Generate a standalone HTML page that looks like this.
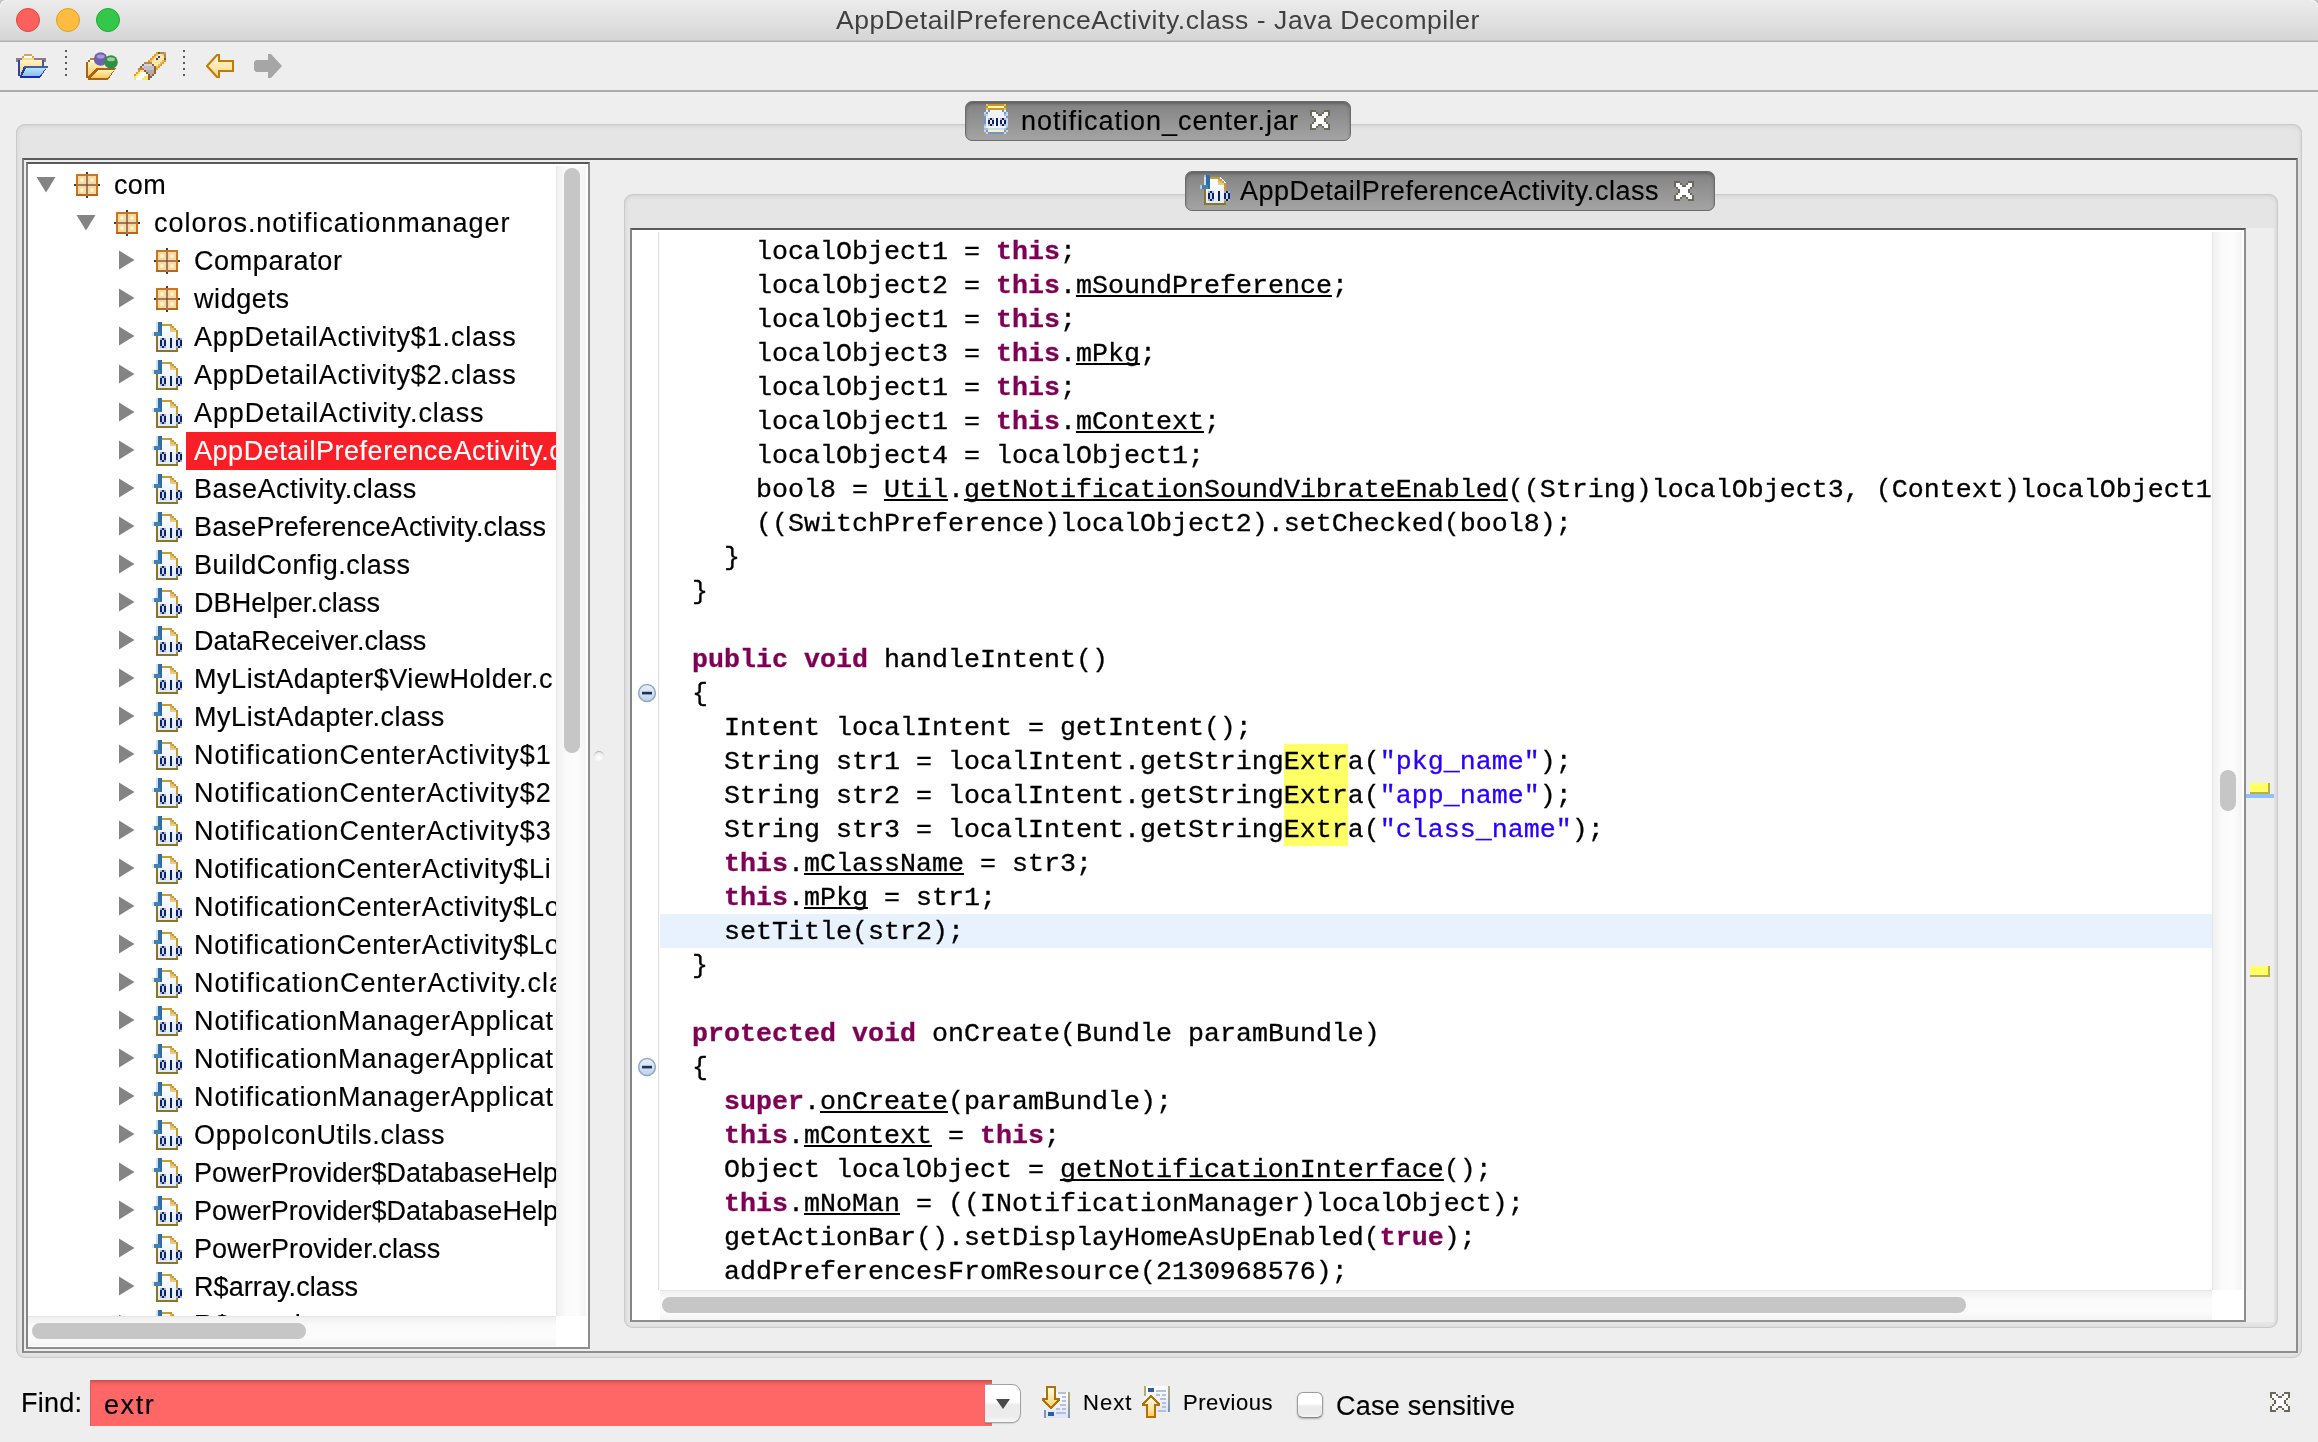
<!DOCTYPE html>
<html><head><meta charset="utf-8"><title>Java Decompiler</title>
<style>
html,body{margin:0;padding:0}
body{width:2318px;height:1442px;position:relative;overflow:hidden;background:#eeeeee;font-family:"Liberation Sans", sans-serif;color:#000}
div,span,svg{box-sizing:border-box}
.a{position:absolute}
.ic{position:absolute;display:block}
.t{position:absolute;white-space:pre;font-size:26px;line-height:30px;height:30px;-webkit-text-stroke:0.15px currentColor}
#title{-webkit-text-stroke:0}
.row{position:absolute;left:0;width:528px;height:38px}
.cl{position:absolute;left:0;white-space:pre;font-family:"Liberation Mono", monospace;font-size:26.667px;line-height:34px;height:34px;color:#000;-webkit-text-stroke:0.3px currentColor}
.k{color:#7f0055;font-weight:bold}
.s{color:#2a00ff}
.u{text-decoration:underline;text-decoration-thickness:2px;text-underline-offset:2px;text-decoration-skip-ink:none}
.h{background:#ffff66}
.thumb{position:absolute;background:#c6c6c6;border-radius:8px}
</style></head><body><div id="root" style="position:absolute;left:0;top:0;width:2318px;height:1442px;will-change:transform">

<div class="a" style="left:0;top:0;width:2318px;height:42px;background:linear-gradient(#ececec,#d5d5d5);border-bottom:1px solid #aeaeae;box-shadow:inset 0 -1px 0 #c6c6c6"></div>
<div class="a" style="left:16px;top:8px;width:24px;height:24px;border-radius:12px;background:#fc605c;border:1px solid #e0443e"></div>
<div class="a" style="left:56px;top:8px;width:24px;height:24px;border-radius:12px;background:#fdbc40;border:1px solid #dfa023"></div>
<div class="a" style="left:96px;top:8px;width:24px;height:24px;border-radius:12px;background:#34c84a;border:1px solid #1fa82f"></div>
<div class="t" id="title" style="left:836px;top:5px;color:#404040;font-size:26.5px;letter-spacing:0.565px">AppDetailPreferenceActivity.class - Java Decompiler</div>

<svg class="ic" style="left:0;top:0" width="8" height="8" viewBox="0 0 8 8"><path d="M0 0H6Q0.5 0.5 0 6Z" fill="#c4c4c4"/><path d="M0.6 7Q0.8 0.8 7 0.6" fill="none" stroke="#f6f6f6" stroke-width="1"/></svg>
<svg class="ic" style="left:2310px;top:0" width="8" height="8" viewBox="0 0 8 8"><path d="M8 0H2Q7.5 0.5 8 6Z" fill="#c4c4c4"/><path d="M7.4 7Q7.2 0.8 1 0.6" fill="none" stroke="#f6f6f6" stroke-width="1"/></svg>
<div class="a" style="left:0;top:90px;width:2318px;height:2px;background:#ababab"></div>
<div class="a" style="left:65px;top:50px;width:2px;height:2px;background:#5a5a5a"></div>
<div class="a" style="left:65px;top:56px;width:2px;height:2px;background:#5a5a5a"></div>
<div class="a" style="left:65px;top:62px;width:2px;height:2px;background:#5a5a5a"></div>
<div class="a" style="left:65px;top:68px;width:2px;height:2px;background:#5a5a5a"></div>
<div class="a" style="left:65px;top:74px;width:2px;height:2px;background:#5a5a5a"></div>
<div class="a" style="left:183px;top:50px;width:2px;height:2px;background:#5a5a5a"></div>
<div class="a" style="left:183px;top:56px;width:2px;height:2px;background:#5a5a5a"></div>
<div class="a" style="left:183px;top:62px;width:2px;height:2px;background:#5a5a5a"></div>
<div class="a" style="left:183px;top:68px;width:2px;height:2px;background:#5a5a5a"></div>
<div class="a" style="left:183px;top:74px;width:2px;height:2px;background:#5a5a5a"></div>
<svg class="ic" style="left:16px;top:54px" width="32" height="24" viewBox="0 0 16 12" shape-rendering="crispEdges">
<defs><linearGradient id="f1" x1="0" y1="0" x2="0" y2="1"><stop offset="0" stop-color="#fff2c8"/><stop offset="1" stop-color="#ffcf5a"/></linearGradient>
<linearGradient id="f2" x1="0" y1="0" x2="0" y2="1"><stop offset="0" stop-color="#b4e6ff"/><stop offset="1" stop-color="#8fbcf0"/></linearGradient></defs>
<rect x="4" y="0" width="4" height="1" fill="#d4a55a"/><rect x="3" y="1" width="1" height="1" fill="#d4a55a"/><rect x="8" y="1" width="1" height="1" fill="#d4a55a"/><rect x="4" y="1" width="4" height="1" fill="#ffffff"/>
<rect x="0" y="2" width="15" height="2" fill="#8d7c8c"/><rect x="3" y="2" width="6" height="1" fill="#f7d98a"/>
<rect x="2" y="3" width="11" height="8" fill="url(#f1)"/>
<rect x="1" y="3" width="1" height="8" fill="#2a44a8"/><rect x="13" y="3" width="1" height="3" fill="#4a5aa0"/>
<polygon points="4,6 16,6 12,12 2,12 2,11" fill="#2238a8"/>
<polygon points="5,7 15,7 12,11 3,11" fill="url(#f2)"/>
<rect x="4" y="6" width="12" height="1" fill="#4a5aa0"/>
<rect x="2" y="11" width="10" height="1" fill="#1030b0"/>
</svg>
<svg class="ic" style="left:86px;top:52px" width="32" height="28" viewBox="0 0 16 14">
<defs><linearGradient id="g1" x1="0" y1="0" x2="0" y2="1"><stop offset="0" stop-color="#fff0c0"/><stop offset="1" stop-color="#f8c860"/></linearGradient></defs>
<g shape-rendering="crispEdges">
<rect x="2" y="3" width="2" height="1" fill="#d08010"/><rect x="1" y="4" width="1" height="1" fill="#b0620a"/><rect x="2" y="4" width="2" height="1" fill="#fff"/>
<rect x="0" y="5" width="1" height="8" fill="#b0620a"/>
<rect x="1" y="5" width="8" height="8" fill="url(#g1)"/>
<polygon points="5,8 15,8 11,14 1,14 1,12" fill="#b0620a"/>
<polygon points="6,9 14,9 11,13 2,13" fill="url(#g1)"/>
<rect x="1" y="13" width="10" height="1" fill="#b0620a"/>
</g>
<circle cx="7.3" cy="3.5" r="3.4" fill="#6f60b0"/><ellipse cx="7.3" cy="2.2" rx="2" ry="1" fill="#a79cd8"/>
<circle cx="12.5" cy="5" r="3.4" fill="#2f8f45"/><ellipse cx="12.5" cy="3.6" rx="2" ry="1" fill="#9ccf90"/>
</svg>
<svg class="ic" style="left:134px;top:52px" width="32" height="28" viewBox="0 0 16 14" shape-rendering="crispEdges"><rect x="11" y="0" width="1" height="1" fill="#f09a20"/><rect x="12" y="0" width="1" height="1" fill="#7a5530"/><rect x="13" y="0" width="2" height="1" fill="#b08850"/><rect x="15" y="0" width="1" height="1" fill="#c8a060"/><rect x="10" y="1" width="1" height="1" fill="#f09a20"/><rect x="11" y="1" width="1" height="1" fill="#f4b860"/><rect x="12" y="1" width="2" height="1" fill="#fde9a0"/><rect x="14" y="1" width="1" height="1" fill="#d0cce0"/><rect x="15" y="1" width="1" height="1" fill="#b08850"/><rect x="9" y="2" width="1" height="1" fill="#f09a20"/><rect x="10" y="2" width="1" height="1" fill="#f4b860"/><rect x="11" y="2" width="1" height="1" fill="#fff4b8"/><rect x="12" y="2" width="1" height="1" fill="#1c4aa8"/><rect x="13" y="2" width="2" height="1" fill="#fde9a0"/><rect x="15" y="2" width="1" height="1" fill="#b08850"/><rect x="8" y="3" width="1" height="1" fill="#f09a20"/><rect x="9" y="3" width="1" height="1" fill="#f4b860"/><rect x="10" y="3" width="1" height="1" fill="#fff4b8"/><rect x="11" y="3" width="1" height="1" fill="#1c4aa8"/><rect x="12" y="3" width="3" height="1" fill="#fde9a0"/><rect x="15" y="3" width="1" height="1" fill="#7a5530"/><rect x="7" y="4" width="1" height="1" fill="#f09a20"/><rect x="8" y="4" width="1" height="1" fill="#f4b860"/><rect x="9" y="4" width="5" height="1" fill="#fde9a0"/><rect x="14" y="4" width="1" height="1" fill="#f4b860"/><rect x="15" y="4" width="1" height="1" fill="#f09a20"/><rect x="5" y="5" width="4" height="1" fill="#b08850"/><rect x="9" y="5" width="4" height="1" fill="#fde9a0"/><rect x="13" y="5" width="1" height="1" fill="#f4b860"/><rect x="14" y="5" width="1" height="1" fill="#f09a20"/><rect x="4" y="6" width="1" height="1" fill="#8a6438"/><rect x="5" y="6" width="4" height="1" fill="#d4d2da"/><rect x="9" y="6" width="1" height="1" fill="#8a6438"/><rect x="10" y="6" width="2" height="1" fill="#fde9a0"/><rect x="12" y="6" width="1" height="1" fill="#f4b860"/><rect x="13" y="6" width="1" height="1" fill="#f09a20"/><rect x="3" y="7" width="1" height="1" fill="#8a6438"/><rect x="4" y="7" width="1" height="1" fill="#d4d2da"/><rect x="5" y="7" width="5" height="1" fill="#c4bcc6"/><rect x="10" y="7" width="1" height="1" fill="#8a6438"/><rect x="11" y="7" width="1" height="1" fill="#f4b860"/><rect x="12" y="7" width="1" height="1" fill="#f09a20"/><rect x="2" y="8" width="3" height="1" fill="#b08850"/><rect x="5" y="8" width="5" height="1" fill="#c4bcc6"/><rect x="10" y="8" width="1" height="1" fill="#8a6438"/><rect x="11" y="8" width="1" height="1" fill="#f09a20"/><rect x="2" y="9" width="1" height="1" fill="#f09a20"/><rect x="3" y="9" width="2" height="1" fill="#ffe470"/><rect x="5" y="9" width="1" height="1" fill="#8a6438"/><rect x="6" y="9" width="4" height="1" fill="#b4a8b2"/><rect x="10" y="9" width="1" height="1" fill="#8a6438"/><rect x="1" y="10" width="1" height="1" fill="#f09a20"/><rect x="2" y="10" width="1" height="1" fill="#ffe470"/><rect x="3" y="10" width="1" height="1" fill="#fff8d0"/><rect x="4" y="10" width="2" height="1" fill="#ffffff"/><rect x="6" y="10" width="1" height="1" fill="#8a6438"/><rect x="7" y="10" width="3" height="1" fill="#b4a8b2"/><rect x="10" y="10" width="1" height="1" fill="#8a6438"/><rect x="0" y="11" width="1" height="1" fill="#f09a20"/><rect x="1" y="11" width="1" height="1" fill="#ffe470"/><rect x="2" y="11" width="1" height="1" fill="#fff8d0"/><rect x="3" y="11" width="3" height="1" fill="#ffffff"/><rect x="6" y="11" width="1" height="1" fill="#fff8d0"/><rect x="7" y="11" width="1" height="1" fill="#8a6438"/><rect x="8" y="11" width="1" height="1" fill="#b4a8b2"/><rect x="9" y="11" width="1" height="1" fill="#8a6438"/><rect x="0" y="12" width="1" height="1" fill="#ffe470"/><rect x="1" y="12" width="1" height="1" fill="#fff8d0"/><rect x="2" y="12" width="3" height="1" fill="#ffffff"/><rect x="5" y="12" width="2" height="1" fill="#ffe470"/><rect x="7" y="12" width="2" height="1" fill="#8a6438"/><rect x="0" y="13" width="1" height="1" fill="#ffe470"/><rect x="1" y="13" width="3" height="1" fill="#ffffff"/><rect x="4" y="13" width="3" height="1" fill="#ffe470"/><rect x="7" y="13" width="1" height="1" fill="#8a6438"/></svg>
<svg class="ic" style="left:206px;top:54px" width="28" height="24" viewBox="0 0 28 24">
<defs><linearGradient id="b1" x1="0" y1="0" x2="0" y2="1"><stop offset="0" stop-color="#fffbe6"/><stop offset="1" stop-color="#ffd57a"/></linearGradient></defs>
<polygon points="1,12 11,1 13,1 13,7 27,7 27,17 13,17 13,23 11,23" fill="url(#b1)" stroke="#c07a08" stroke-width="2" stroke-linejoin="miter"/>
</svg>
<svg class="ic" style="left:254px;top:54px" width="28" height="24" viewBox="0 0 28 24">
<polygon points="28,12 17,0 14,0 14,6 2,6 0,8 0,16 2,18 14,18 14,24 17,24" fill="#a6a6a6"/>
</svg>
<div class="a" style="left:16px;top:124px;width:2286px;height:1234px;border-radius:9px;background:#e5e5e5;box-shadow:inset 0 0 0 1px #cacaca, inset 0 1px 4px 1px #d0d0d0"></div>
<div class="a" style="left:965px;top:101px;width:386px;height:40px;border-radius:7px;background:linear-gradient(#828282,#a4a4a4);border:1px solid #6c6c6c;box-shadow:inset 0 2px 3px rgba(0,0,0,.25)"></div>
<svg class="ic" style="left:984px;top:104px" width="24" height="30" viewBox="0 0 12 15" shape-rendering="crispEdges"><rect x="1" y="0" width="1" height="1" fill="#e4c458"/><rect x="2" y="0" width="8" height="1" fill="#c89a18"/><rect x="10" y="0" width="1" height="1" fill="#e4c458"/><rect x="1" y="1" width="1" height="1" fill="#c89a18"/><rect x="2" y="1" width="8" height="1" fill="#fff6d0"/><rect x="10" y="1" width="1" height="1" fill="#c89a18"/><rect x="1" y="2" width="1" height="1" fill="#e4c458"/><rect x="2" y="2" width="8" height="1" fill="#c89a18"/><rect x="10" y="2" width="1" height="1" fill="#e4c458"/><rect x="1" y="3" width="1" height="1" fill="#eef3fb"/><rect x="2" y="3" width="1" height="1" fill="#7494c8"/><rect x="3" y="3" width="6" height="1" fill="#eef3fb"/><rect x="9" y="3" width="1" height="1" fill="#7494c8"/><rect x="10" y="3" width="1" height="1" fill="#eef3fb"/><rect x="0" y="4" width="1" height="1" fill="#c8d8f0"/><rect x="1" y="4" width="1" height="1" fill="#7494c8"/><rect x="2" y="4" width="8" height="1" fill="#eef3fb"/><rect x="10" y="4" width="1" height="1" fill="#7494c8"/><rect x="11" y="4" width="1" height="1" fill="#c8d8f0"/><rect x="0" y="5" width="1" height="1" fill="#a4bade"/><rect x="1" y="5" width="1" height="1" fill="#c8d8f0"/><rect x="2" y="5" width="8" height="1" fill="#eef3fb"/><rect x="10" y="5" width="1" height="1" fill="#a4bade"/><rect x="11" y="5" width="1" height="1" fill="#c8d8f0"/><rect x="0" y="6" width="1" height="1" fill="#7494c8"/><rect x="1" y="6" width="10" height="1" fill="#eef3fb"/><rect x="11" y="6" width="1" height="1" fill="#7494c8"/><rect x="0" y="7" width="1" height="1" fill="#7494c8"/><rect x="1" y="7" width="1" height="1" fill="#eef3fb"/><rect x="2" y="7" width="1" height="1" fill="#b8bcd8"/><rect x="3" y="7" width="1" height="1" fill="#0a1f5c"/><rect x="4" y="7" width="1" height="1" fill="#b8bcd8"/><rect x="5" y="7" width="1" height="1" fill="#eef3fb"/><rect x="6" y="7" width="1" height="1" fill="#0a1f5c"/><rect x="7" y="7" width="1" height="1" fill="#eef3fb"/><rect x="8" y="7" width="1" height="1" fill="#b8bcd8"/><rect x="9" y="7" width="1" height="1" fill="#0a1f5c"/><rect x="10" y="7" width="1" height="1" fill="#b8bcd8"/><rect x="11" y="7" width="1" height="1" fill="#c8d8f0"/><rect x="0" y="8" width="1" height="1" fill="#7494c8"/><rect x="1" y="8" width="1" height="1" fill="#eef3fb"/><rect x="2" y="8" width="1" height="1" fill="#0a1f5c"/><rect x="3" y="8" width="1" height="1" fill="#f6ecf0"/><rect x="4" y="8" width="1" height="1" fill="#0a1f5c"/><rect x="5" y="8" width="1" height="1" fill="#eef3fb"/><rect x="6" y="8" width="1" height="1" fill="#0a1f5c"/><rect x="7" y="8" width="1" height="1" fill="#eef3fb"/><rect x="8" y="8" width="1" height="1" fill="#0a1f5c"/><rect x="9" y="8" width="1" height="1" fill="#f6ecf0"/><rect x="10" y="8" width="1" height="1" fill="#0a1f5c"/><rect x="11" y="8" width="1" height="1" fill="#c8d8f0"/><rect x="0" y="9" width="1" height="1" fill="#7494c8"/><rect x="1" y="9" width="1" height="1" fill="#eef3fb"/><rect x="2" y="9" width="1" height="1" fill="#0a1f5c"/><rect x="3" y="9" width="1" height="1" fill="#f6ecf0"/><rect x="4" y="9" width="1" height="1" fill="#0a1f5c"/><rect x="5" y="9" width="1" height="1" fill="#eef3fb"/><rect x="6" y="9" width="1" height="1" fill="#0a1f5c"/><rect x="7" y="9" width="1" height="1" fill="#eef3fb"/><rect x="8" y="9" width="1" height="1" fill="#0a1f5c"/><rect x="9" y="9" width="1" height="1" fill="#f6ecf0"/><rect x="10" y="9" width="1" height="1" fill="#0a1f5c"/><rect x="11" y="9" width="1" height="1" fill="#c8d8f0"/><rect x="0" y="10" width="1" height="1" fill="#a4bade"/><rect x="1" y="10" width="1" height="1" fill="#eef3fb"/><rect x="2" y="10" width="1" height="1" fill="#b8bcd8"/><rect x="3" y="10" width="1" height="1" fill="#0a1f5c"/><rect x="4" y="10" width="1" height="1" fill="#b8bcd8"/><rect x="5" y="10" width="1" height="1" fill="#eef3fb"/><rect x="6" y="10" width="1" height="1" fill="#0a1f5c"/><rect x="7" y="10" width="1" height="1" fill="#eef3fb"/><rect x="8" y="10" width="1" height="1" fill="#b8bcd8"/><rect x="9" y="10" width="1" height="1" fill="#0a1f5c"/><rect x="10" y="10" width="1" height="1" fill="#b8bcd8"/><rect x="11" y="10" width="1" height="1" fill="#c8d8f0"/><rect x="0" y="11" width="1" height="1" fill="#c8d8f0"/><rect x="1" y="11" width="10" height="1" fill="#eef3fb"/><rect x="11" y="11" width="1" height="1" fill="#a4bade"/><rect x="0" y="12" width="1" height="1" fill="#a4bade"/><rect x="1" y="12" width="1" height="1" fill="#b8c0a8"/><rect x="2" y="12" width="8" height="1" fill="#c8dcec"/><rect x="10" y="12" width="1" height="1" fill="#b8c0a8"/><rect x="11" y="12" width="1" height="1" fill="#7494c8"/><rect x="0" y="13" width="1" height="1" fill="#c8d8f0"/><rect x="1" y="13" width="1" height="1" fill="#7494c8"/><rect x="2" y="13" width="8" height="1" fill="#fdf0c0"/><rect x="10" y="13" width="1" height="1" fill="#7494c8"/><rect x="11" y="13" width="1" height="1" fill="#c8d8f0"/><rect x="1" y="14" width="1" height="1" fill="#c8d8f0"/><rect x="2" y="14" width="8" height="1" fill="#7494c8"/><rect x="10" y="14" width="1" height="1" fill="#c8d8f0"/></svg>
<div class="t" id="tab1" style="left:1021px;top:106px;font-size:27px;letter-spacing:0.993px">notification_center.jar</div>
<svg class="ic" style="left:1310px;top:110px" width="20" height="20" viewBox="0 0 10 10" shape-rendering="crispEdges"><rect x="0" y="0" width="3" height="1" fill="#6b675a"/><rect x="7" y="0" width="3" height="1" fill="#6b675a"/><rect x="0" y="1" width="1" height="1" fill="#6b675a"/><rect x="1" y="1" width="2" height="1" fill="#ffffff"/><rect x="3" y="1" width="1" height="1" fill="#6b675a"/><rect x="6" y="1" width="1" height="1" fill="#6b675a"/><rect x="7" y="1" width="2" height="1" fill="#ffffff"/><rect x="9" y="1" width="1" height="1" fill="#6b675a"/><rect x="0" y="2" width="1" height="1" fill="#6b675a"/><rect x="1" y="2" width="3" height="1" fill="#ffffff"/><rect x="4" y="2" width="2" height="1" fill="#6b675a"/><rect x="6" y="2" width="3" height="1" fill="#ffffff"/><rect x="9" y="2" width="1" height="1" fill="#6b675a"/><rect x="1" y="3" width="1" height="1" fill="#6b675a"/><rect x="2" y="3" width="6" height="1" fill="#ffffff"/><rect x="8" y="3" width="1" height="1" fill="#6b675a"/><rect x="2" y="4" width="1" height="1" fill="#6b675a"/><rect x="3" y="4" width="4" height="1" fill="#ffffff"/><rect x="7" y="4" width="1" height="1" fill="#6b675a"/><rect x="2" y="5" width="1" height="1" fill="#6b675a"/><rect x="3" y="5" width="4" height="1" fill="#ffffff"/><rect x="7" y="5" width="1" height="1" fill="#6b675a"/><rect x="1" y="6" width="1" height="1" fill="#6b675a"/><rect x="2" y="6" width="6" height="1" fill="#ffffff"/><rect x="8" y="6" width="1" height="1" fill="#6b675a"/><rect x="0" y="7" width="1" height="1" fill="#6b675a"/><rect x="1" y="7" width="3" height="1" fill="#ffffff"/><rect x="4" y="7" width="2" height="1" fill="#6b675a"/><rect x="6" y="7" width="3" height="1" fill="#ffffff"/><rect x="9" y="7" width="1" height="1" fill="#6b675a"/><rect x="0" y="8" width="1" height="1" fill="#6b675a"/><rect x="1" y="8" width="2" height="1" fill="#ffffff"/><rect x="3" y="8" width="1" height="1" fill="#6b675a"/><rect x="6" y="8" width="1" height="1" fill="#6b675a"/><rect x="7" y="8" width="2" height="1" fill="#ffffff"/><rect x="9" y="8" width="1" height="1" fill="#6b675a"/><rect x="0" y="9" width="3" height="1" fill="#6b675a"/><rect x="7" y="9" width="3" height="1" fill="#6b675a"/></svg>
<div class="a" style="left:22px;top:158px;width:2276px;height:1195px;background:#eeeeee;border:2px solid #8e8e8e;border-top-color:#5a5a5a;border-left-color:#858585"></div>
<div class="a" style="left:26px;top:162px;width:564px;height:1187px;background:#fff;border:2px solid #8e8e8e;border-top-color:#5a5a5a;border-left-color:#858585"></div>
<div class="a" id="treevp" style="left:28px;top:164px;width:528px;height:1152px;overflow:hidden;background:#fff">
<svg class="ic" style="left:8px;top:13px" width="20" height="16" viewBox="0 0 20 16"><polygon points="0.5,0 19.5,0 10,15.5" fill="#848484"/></svg>
<svg class="ic" style="left:46px;top:8px" width="26" height="26" viewBox="0 0 13 13" shape-rendering="crispEdges">
<rect x="1" y="1" width="11" height="11" fill="#c9771f"/>
<rect x="1" y="11" width="11" height="1" fill="#b5651d"/>
<rect x="2" y="2" width="9" height="9" fill="#f3d9a6"/>
<rect x="3" y="3" width="2" height="2" fill="#fbe9b8"/><rect x="8" y="3" width="2" height="2" fill="#fbe9b8"/>
<rect x="3" y="8" width="2" height="2" fill="#fbe9b8"/><rect x="8" y="8" width="2" height="2" fill="#fbe9b8"/>
<rect x="3.5" y="3.5" width="1" height="1" fill="#ffffb0"/><rect x="8.5" y="3.5" width="1" height="1" fill="#ffffb0"/>
<rect x="3.5" y="8.5" width="1" height="1" fill="#ffffb0"/><rect x="8.5" y="8.5" width="1" height="1" fill="#ffffb0"/>
<rect x="6" y="1" width="1" height="11" fill="#a8765c"/><rect x="1" y="6" width="11" height="1" fill="#a8765c"/>
<rect x="6" y="6" width="1" height="1" fill="#8a5640"/>
<rect x="6" y="0" width="1" height="1" fill="#6b2f0a"/><rect x="6" y="12" width="1" height="1" fill="#6b2f0a"/>
<rect x="0" y="6" width="1" height="1" fill="#6b2f0a"/><rect x="12" y="6" width="1" height="1" fill="#6b2f0a"/>
</svg>
<div class="t" style="left:86px;top:6px;font-size:27px;letter-spacing:0.342px;">com</div>
<svg class="ic" style="left:48px;top:51px" width="20" height="16" viewBox="0 0 20 16"><polygon points="0.5,0 19.5,0 10,15.5" fill="#848484"/></svg>
<svg class="ic" style="left:86px;top:46px" width="26" height="26" viewBox="0 0 13 13" shape-rendering="crispEdges">
<rect x="1" y="1" width="11" height="11" fill="#c9771f"/>
<rect x="1" y="11" width="11" height="1" fill="#b5651d"/>
<rect x="2" y="2" width="9" height="9" fill="#f3d9a6"/>
<rect x="3" y="3" width="2" height="2" fill="#fbe9b8"/><rect x="8" y="3" width="2" height="2" fill="#fbe9b8"/>
<rect x="3" y="8" width="2" height="2" fill="#fbe9b8"/><rect x="8" y="8" width="2" height="2" fill="#fbe9b8"/>
<rect x="3.5" y="3.5" width="1" height="1" fill="#ffffb0"/><rect x="8.5" y="3.5" width="1" height="1" fill="#ffffb0"/>
<rect x="3.5" y="8.5" width="1" height="1" fill="#ffffb0"/><rect x="8.5" y="8.5" width="1" height="1" fill="#ffffb0"/>
<rect x="6" y="1" width="1" height="11" fill="#a8765c"/><rect x="1" y="6" width="11" height="1" fill="#a8765c"/>
<rect x="6" y="6" width="1" height="1" fill="#8a5640"/>
<rect x="6" y="0" width="1" height="1" fill="#6b2f0a"/><rect x="6" y="12" width="1" height="1" fill="#6b2f0a"/>
<rect x="0" y="6" width="1" height="1" fill="#6b2f0a"/><rect x="12" y="6" width="1" height="1" fill="#6b2f0a"/>
</svg>
<div class="t" style="left:126px;top:44px;font-size:27px;letter-spacing:0.977px;">coloros.notificationmanager</div>
<svg class="ic" style="left:91px;top:86px" width="16" height="20" viewBox="0 0 16 20"><polygon points="0,0.5 15.5,10 0,19.5" fill="#848484"/></svg>
<svg class="ic" style="left:126px;top:84px" width="26" height="26" viewBox="0 0 13 13" shape-rendering="crispEdges">
<rect x="1" y="1" width="11" height="11" fill="#c9771f"/>
<rect x="1" y="11" width="11" height="1" fill="#b5651d"/>
<rect x="2" y="2" width="9" height="9" fill="#f3d9a6"/>
<rect x="3" y="3" width="2" height="2" fill="#fbe9b8"/><rect x="8" y="3" width="2" height="2" fill="#fbe9b8"/>
<rect x="3" y="8" width="2" height="2" fill="#fbe9b8"/><rect x="8" y="8" width="2" height="2" fill="#fbe9b8"/>
<rect x="3.5" y="3.5" width="1" height="1" fill="#ffffb0"/><rect x="8.5" y="3.5" width="1" height="1" fill="#ffffb0"/>
<rect x="3.5" y="8.5" width="1" height="1" fill="#ffffb0"/><rect x="8.5" y="8.5" width="1" height="1" fill="#ffffb0"/>
<rect x="6" y="1" width="1" height="11" fill="#a8765c"/><rect x="1" y="6" width="11" height="1" fill="#a8765c"/>
<rect x="6" y="6" width="1" height="1" fill="#8a5640"/>
<rect x="6" y="0" width="1" height="1" fill="#6b2f0a"/><rect x="6" y="12" width="1" height="1" fill="#6b2f0a"/>
<rect x="0" y="6" width="1" height="1" fill="#6b2f0a"/><rect x="12" y="6" width="1" height="1" fill="#6b2f0a"/>
</svg>
<div class="t" style="left:166px;top:82px;font-size:27px;letter-spacing:0.593px;">Comparator</div>
<svg class="ic" style="left:91px;top:124px" width="16" height="20" viewBox="0 0 16 20"><polygon points="0,0.5 15.5,10 0,19.5" fill="#848484"/></svg>
<svg class="ic" style="left:126px;top:122px" width="26" height="26" viewBox="0 0 13 13" shape-rendering="crispEdges">
<rect x="1" y="1" width="11" height="11" fill="#c9771f"/>
<rect x="1" y="11" width="11" height="1" fill="#b5651d"/>
<rect x="2" y="2" width="9" height="9" fill="#f3d9a6"/>
<rect x="3" y="3" width="2" height="2" fill="#fbe9b8"/><rect x="8" y="3" width="2" height="2" fill="#fbe9b8"/>
<rect x="3" y="8" width="2" height="2" fill="#fbe9b8"/><rect x="8" y="8" width="2" height="2" fill="#fbe9b8"/>
<rect x="3.5" y="3.5" width="1" height="1" fill="#ffffb0"/><rect x="8.5" y="3.5" width="1" height="1" fill="#ffffb0"/>
<rect x="3.5" y="8.5" width="1" height="1" fill="#ffffb0"/><rect x="8.5" y="8.5" width="1" height="1" fill="#ffffb0"/>
<rect x="6" y="1" width="1" height="11" fill="#a8765c"/><rect x="1" y="6" width="11" height="1" fill="#a8765c"/>
<rect x="6" y="6" width="1" height="1" fill="#8a5640"/>
<rect x="6" y="0" width="1" height="1" fill="#6b2f0a"/><rect x="6" y="12" width="1" height="1" fill="#6b2f0a"/>
<rect x="0" y="6" width="1" height="1" fill="#6b2f0a"/><rect x="12" y="6" width="1" height="1" fill="#6b2f0a"/>
</svg>
<div class="t" style="left:166px;top:120px;font-size:27px;letter-spacing:0.576px;">widgets</div>
<svg class="ic" style="left:91px;top:162px" width="16" height="20" viewBox="0 0 16 20"><polygon points="0,0.5 15.5,10 0,19.5" fill="#848484"/></svg>
<svg class="ic" style="left:124px;top:156px" width="32" height="32" viewBox="0 0 16 16" shape-rendering="crispEdges">
<defs><linearGradient id="pg" x1="0" y1="0" x2="0" y2="1"><stop offset="0" stop-color="#ffffff"/><stop offset="1" stop-color="#dfe9f8"/></linearGradient></defs>
<polygon points="2,2 10,2 13,5 13,16 2,16" fill="url(#pg)"/>
<rect x="5" y="2" width="5" height="1" fill="#c89a30"/>
<rect x="9" y="3" width="1" height="1" fill="#d8b050"/><rect x="10" y="3" width="1" height="1" fill="#c89a30"/>
<rect x="9" y="4" width="2" height="1" fill="#e0c070"/><rect x="11" y="4" width="1" height="1" fill="#c89a30"/>
<rect x="9" y="5" width="3" height="1" fill="#e8cc88"/><rect x="12" y="5" width="1" height="4" fill="#c89a30"/>
<rect x="12" y="14" width="1" height="1" fill="#b08a30"/>
<rect x="2" y="8" width="1" height="8" fill="#8a7428"/>
<rect x="2" y="15" width="11" height="1" fill="#8a7428"/>
<rect x="3" y="1" width="2" height="7" fill="#2e6ea6"/><rect x="1" y="6" width="3" height="2" fill="#3f82b8"/>
<rect x="2" y="1" width="1" height="5" fill="#bcd4ea" opacity=".7"/><rect x="0" y="6" width="1" height="2" fill="#cfe0f0" opacity=".7"/>
<g fill="#0a2463">
<rect x="4" y="9" width="3" height="1"/><rect x="4" y="13" width="3" height="1"/><rect x="4" y="9" width="1" height="5"/><rect x="6" y="9" width="1" height="5"/>
<rect x="9" y="9" width="1" height="5"/>
<rect x="12" y="9" width="3" height="1"/><rect x="12" y="13" width="3" height="1"/><rect x="12" y="9" width="1" height="5"/><rect x="14" y="9" width="1" height="5"/>
</g>
<g fill="#c9d4ea"><rect x="5" y="10" width="1" height="3"/><rect x="13" y="10" width="1" height="3"/></g>
<g fill="#aab2d2"><rect x="4" y="9" width="1" height="1"/><rect x="6" y="9" width="1" height="1"/><rect x="4" y="13" width="1" height="1"/><rect x="6" y="13" width="1" height="1"/><rect x="12" y="9" width="1" height="1"/><rect x="14" y="9" width="1" height="1"/><rect x="12" y="13" width="1" height="1"/><rect x="14" y="13" width="1" height="1"/></g>
</svg>
<div class="t" style="left:166px;top:158px;font-size:27px;letter-spacing:0.840px;">AppDetailActivity$1.class</div>
<svg class="ic" style="left:91px;top:200px" width="16" height="20" viewBox="0 0 16 20"><polygon points="0,0.5 15.5,10 0,19.5" fill="#848484"/></svg>
<svg class="ic" style="left:124px;top:194px" width="32" height="32" viewBox="0 0 16 16" shape-rendering="crispEdges">
<defs><linearGradient id="pg" x1="0" y1="0" x2="0" y2="1"><stop offset="0" stop-color="#ffffff"/><stop offset="1" stop-color="#dfe9f8"/></linearGradient></defs>
<polygon points="2,2 10,2 13,5 13,16 2,16" fill="url(#pg)"/>
<rect x="5" y="2" width="5" height="1" fill="#c89a30"/>
<rect x="9" y="3" width="1" height="1" fill="#d8b050"/><rect x="10" y="3" width="1" height="1" fill="#c89a30"/>
<rect x="9" y="4" width="2" height="1" fill="#e0c070"/><rect x="11" y="4" width="1" height="1" fill="#c89a30"/>
<rect x="9" y="5" width="3" height="1" fill="#e8cc88"/><rect x="12" y="5" width="1" height="4" fill="#c89a30"/>
<rect x="12" y="14" width="1" height="1" fill="#b08a30"/>
<rect x="2" y="8" width="1" height="8" fill="#8a7428"/>
<rect x="2" y="15" width="11" height="1" fill="#8a7428"/>
<rect x="3" y="1" width="2" height="7" fill="#2e6ea6"/><rect x="1" y="6" width="3" height="2" fill="#3f82b8"/>
<rect x="2" y="1" width="1" height="5" fill="#bcd4ea" opacity=".7"/><rect x="0" y="6" width="1" height="2" fill="#cfe0f0" opacity=".7"/>
<g fill="#0a2463">
<rect x="4" y="9" width="3" height="1"/><rect x="4" y="13" width="3" height="1"/><rect x="4" y="9" width="1" height="5"/><rect x="6" y="9" width="1" height="5"/>
<rect x="9" y="9" width="1" height="5"/>
<rect x="12" y="9" width="3" height="1"/><rect x="12" y="13" width="3" height="1"/><rect x="12" y="9" width="1" height="5"/><rect x="14" y="9" width="1" height="5"/>
</g>
<g fill="#c9d4ea"><rect x="5" y="10" width="1" height="3"/><rect x="13" y="10" width="1" height="3"/></g>
<g fill="#aab2d2"><rect x="4" y="9" width="1" height="1"/><rect x="6" y="9" width="1" height="1"/><rect x="4" y="13" width="1" height="1"/><rect x="6" y="13" width="1" height="1"/><rect x="12" y="9" width="1" height="1"/><rect x="14" y="9" width="1" height="1"/><rect x="12" y="13" width="1" height="1"/><rect x="14" y="13" width="1" height="1"/></g>
</svg>
<div class="t" style="left:166px;top:196px;font-size:27px;letter-spacing:0.840px;">AppDetailActivity$2.class</div>
<svg class="ic" style="left:91px;top:238px" width="16" height="20" viewBox="0 0 16 20"><polygon points="0,0.5 15.5,10 0,19.5" fill="#848484"/></svg>
<svg class="ic" style="left:124px;top:232px" width="32" height="32" viewBox="0 0 16 16" shape-rendering="crispEdges">
<defs><linearGradient id="pg" x1="0" y1="0" x2="0" y2="1"><stop offset="0" stop-color="#ffffff"/><stop offset="1" stop-color="#dfe9f8"/></linearGradient></defs>
<polygon points="2,2 10,2 13,5 13,16 2,16" fill="url(#pg)"/>
<rect x="5" y="2" width="5" height="1" fill="#c89a30"/>
<rect x="9" y="3" width="1" height="1" fill="#d8b050"/><rect x="10" y="3" width="1" height="1" fill="#c89a30"/>
<rect x="9" y="4" width="2" height="1" fill="#e0c070"/><rect x="11" y="4" width="1" height="1" fill="#c89a30"/>
<rect x="9" y="5" width="3" height="1" fill="#e8cc88"/><rect x="12" y="5" width="1" height="4" fill="#c89a30"/>
<rect x="12" y="14" width="1" height="1" fill="#b08a30"/>
<rect x="2" y="8" width="1" height="8" fill="#8a7428"/>
<rect x="2" y="15" width="11" height="1" fill="#8a7428"/>
<rect x="3" y="1" width="2" height="7" fill="#2e6ea6"/><rect x="1" y="6" width="3" height="2" fill="#3f82b8"/>
<rect x="2" y="1" width="1" height="5" fill="#bcd4ea" opacity=".7"/><rect x="0" y="6" width="1" height="2" fill="#cfe0f0" opacity=".7"/>
<g fill="#0a2463">
<rect x="4" y="9" width="3" height="1"/><rect x="4" y="13" width="3" height="1"/><rect x="4" y="9" width="1" height="5"/><rect x="6" y="9" width="1" height="5"/>
<rect x="9" y="9" width="1" height="5"/>
<rect x="12" y="9" width="3" height="1"/><rect x="12" y="13" width="3" height="1"/><rect x="12" y="9" width="1" height="5"/><rect x="14" y="9" width="1" height="5"/>
</g>
<g fill="#c9d4ea"><rect x="5" y="10" width="1" height="3"/><rect x="13" y="10" width="1" height="3"/></g>
<g fill="#aab2d2"><rect x="4" y="9" width="1" height="1"/><rect x="6" y="9" width="1" height="1"/><rect x="4" y="13" width="1" height="1"/><rect x="6" y="13" width="1" height="1"/><rect x="12" y="9" width="1" height="1"/><rect x="14" y="9" width="1" height="1"/><rect x="12" y="13" width="1" height="1"/><rect x="14" y="13" width="1" height="1"/></g>
</svg>
<div class="t" style="left:166px;top:234px;font-size:27px;letter-spacing:0.909px;">AppDetailActivity.class</div>
<svg class="ic" style="left:91px;top:276px" width="16" height="20" viewBox="0 0 16 20"><polygon points="0,0.5 15.5,10 0,19.5" fill="#848484"/></svg>
<svg class="ic" style="left:124px;top:270px" width="32" height="32" viewBox="0 0 16 16" shape-rendering="crispEdges">
<defs><linearGradient id="pg" x1="0" y1="0" x2="0" y2="1"><stop offset="0" stop-color="#ffffff"/><stop offset="1" stop-color="#dfe9f8"/></linearGradient></defs>
<polygon points="2,2 10,2 13,5 13,16 2,16" fill="url(#pg)"/>
<rect x="5" y="2" width="5" height="1" fill="#c89a30"/>
<rect x="9" y="3" width="1" height="1" fill="#d8b050"/><rect x="10" y="3" width="1" height="1" fill="#c89a30"/>
<rect x="9" y="4" width="2" height="1" fill="#e0c070"/><rect x="11" y="4" width="1" height="1" fill="#c89a30"/>
<rect x="9" y="5" width="3" height="1" fill="#e8cc88"/><rect x="12" y="5" width="1" height="4" fill="#c89a30"/>
<rect x="12" y="14" width="1" height="1" fill="#b08a30"/>
<rect x="2" y="8" width="1" height="8" fill="#8a7428"/>
<rect x="2" y="15" width="11" height="1" fill="#8a7428"/>
<rect x="3" y="1" width="2" height="7" fill="#2e6ea6"/><rect x="1" y="6" width="3" height="2" fill="#3f82b8"/>
<rect x="2" y="1" width="1" height="5" fill="#bcd4ea" opacity=".7"/><rect x="0" y="6" width="1" height="2" fill="#cfe0f0" opacity=".7"/>
<g fill="#0a2463">
<rect x="4" y="9" width="3" height="1"/><rect x="4" y="13" width="3" height="1"/><rect x="4" y="9" width="1" height="5"/><rect x="6" y="9" width="1" height="5"/>
<rect x="9" y="9" width="1" height="5"/>
<rect x="12" y="9" width="3" height="1"/><rect x="12" y="13" width="3" height="1"/><rect x="12" y="9" width="1" height="5"/><rect x="14" y="9" width="1" height="5"/>
</g>
<g fill="#c9d4ea"><rect x="5" y="10" width="1" height="3"/><rect x="13" y="10" width="1" height="3"/></g>
<g fill="#aab2d2"><rect x="4" y="9" width="1" height="1"/><rect x="6" y="9" width="1" height="1"/><rect x="4" y="13" width="1" height="1"/><rect x="6" y="13" width="1" height="1"/><rect x="12" y="9" width="1" height="1"/><rect x="14" y="9" width="1" height="1"/><rect x="12" y="13" width="1" height="1"/><rect x="14" y="13" width="1" height="1"/></g>
</svg>
<div class="a" style="left:158px;top:268px;width:400px;height:38px;background:#fa1f27"></div>
<div class="t" style="left:166px;top:272px;font-size:27px;letter-spacing:0.539px;color:#fff;">AppDetailPreferenceActivity.class</div>
<svg class="ic" style="left:91px;top:314px" width="16" height="20" viewBox="0 0 16 20"><polygon points="0,0.5 15.5,10 0,19.5" fill="#848484"/></svg>
<svg class="ic" style="left:124px;top:308px" width="32" height="32" viewBox="0 0 16 16" shape-rendering="crispEdges">
<defs><linearGradient id="pg" x1="0" y1="0" x2="0" y2="1"><stop offset="0" stop-color="#ffffff"/><stop offset="1" stop-color="#dfe9f8"/></linearGradient></defs>
<polygon points="2,2 10,2 13,5 13,16 2,16" fill="url(#pg)"/>
<rect x="5" y="2" width="5" height="1" fill="#c89a30"/>
<rect x="9" y="3" width="1" height="1" fill="#d8b050"/><rect x="10" y="3" width="1" height="1" fill="#c89a30"/>
<rect x="9" y="4" width="2" height="1" fill="#e0c070"/><rect x="11" y="4" width="1" height="1" fill="#c89a30"/>
<rect x="9" y="5" width="3" height="1" fill="#e8cc88"/><rect x="12" y="5" width="1" height="4" fill="#c89a30"/>
<rect x="12" y="14" width="1" height="1" fill="#b08a30"/>
<rect x="2" y="8" width="1" height="8" fill="#8a7428"/>
<rect x="2" y="15" width="11" height="1" fill="#8a7428"/>
<rect x="3" y="1" width="2" height="7" fill="#2e6ea6"/><rect x="1" y="6" width="3" height="2" fill="#3f82b8"/>
<rect x="2" y="1" width="1" height="5" fill="#bcd4ea" opacity=".7"/><rect x="0" y="6" width="1" height="2" fill="#cfe0f0" opacity=".7"/>
<g fill="#0a2463">
<rect x="4" y="9" width="3" height="1"/><rect x="4" y="13" width="3" height="1"/><rect x="4" y="9" width="1" height="5"/><rect x="6" y="9" width="1" height="5"/>
<rect x="9" y="9" width="1" height="5"/>
<rect x="12" y="9" width="3" height="1"/><rect x="12" y="13" width="3" height="1"/><rect x="12" y="9" width="1" height="5"/><rect x="14" y="9" width="1" height="5"/>
</g>
<g fill="#c9d4ea"><rect x="5" y="10" width="1" height="3"/><rect x="13" y="10" width="1" height="3"/></g>
<g fill="#aab2d2"><rect x="4" y="9" width="1" height="1"/><rect x="6" y="9" width="1" height="1"/><rect x="4" y="13" width="1" height="1"/><rect x="6" y="13" width="1" height="1"/><rect x="12" y="9" width="1" height="1"/><rect x="14" y="9" width="1" height="1"/><rect x="12" y="13" width="1" height="1"/><rect x="14" y="13" width="1" height="1"/></g>
</svg>
<div class="t" style="left:166px;top:310px;font-size:27px;letter-spacing:0.485px;">BaseActivity.class</div>
<svg class="ic" style="left:91px;top:352px" width="16" height="20" viewBox="0 0 16 20"><polygon points="0,0.5 15.5,10 0,19.5" fill="#848484"/></svg>
<svg class="ic" style="left:124px;top:346px" width="32" height="32" viewBox="0 0 16 16" shape-rendering="crispEdges">
<defs><linearGradient id="pg" x1="0" y1="0" x2="0" y2="1"><stop offset="0" stop-color="#ffffff"/><stop offset="1" stop-color="#dfe9f8"/></linearGradient></defs>
<polygon points="2,2 10,2 13,5 13,16 2,16" fill="url(#pg)"/>
<rect x="5" y="2" width="5" height="1" fill="#c89a30"/>
<rect x="9" y="3" width="1" height="1" fill="#d8b050"/><rect x="10" y="3" width="1" height="1" fill="#c89a30"/>
<rect x="9" y="4" width="2" height="1" fill="#e0c070"/><rect x="11" y="4" width="1" height="1" fill="#c89a30"/>
<rect x="9" y="5" width="3" height="1" fill="#e8cc88"/><rect x="12" y="5" width="1" height="4" fill="#c89a30"/>
<rect x="12" y="14" width="1" height="1" fill="#b08a30"/>
<rect x="2" y="8" width="1" height="8" fill="#8a7428"/>
<rect x="2" y="15" width="11" height="1" fill="#8a7428"/>
<rect x="3" y="1" width="2" height="7" fill="#2e6ea6"/><rect x="1" y="6" width="3" height="2" fill="#3f82b8"/>
<rect x="2" y="1" width="1" height="5" fill="#bcd4ea" opacity=".7"/><rect x="0" y="6" width="1" height="2" fill="#cfe0f0" opacity=".7"/>
<g fill="#0a2463">
<rect x="4" y="9" width="3" height="1"/><rect x="4" y="13" width="3" height="1"/><rect x="4" y="9" width="1" height="5"/><rect x="6" y="9" width="1" height="5"/>
<rect x="9" y="9" width="1" height="5"/>
<rect x="12" y="9" width="3" height="1"/><rect x="12" y="13" width="3" height="1"/><rect x="12" y="9" width="1" height="5"/><rect x="14" y="9" width="1" height="5"/>
</g>
<g fill="#c9d4ea"><rect x="5" y="10" width="1" height="3"/><rect x="13" y="10" width="1" height="3"/></g>
<g fill="#aab2d2"><rect x="4" y="9" width="1" height="1"/><rect x="6" y="9" width="1" height="1"/><rect x="4" y="13" width="1" height="1"/><rect x="6" y="13" width="1" height="1"/><rect x="12" y="9" width="1" height="1"/><rect x="14" y="9" width="1" height="1"/><rect x="12" y="13" width="1" height="1"/><rect x="14" y="13" width="1" height="1"/></g>
</svg>
<div class="t" style="left:166px;top:348px;font-size:27px;letter-spacing:0.217px;">BasePreferenceActivity.class</div>
<svg class="ic" style="left:91px;top:390px" width="16" height="20" viewBox="0 0 16 20"><polygon points="0,0.5 15.5,10 0,19.5" fill="#848484"/></svg>
<svg class="ic" style="left:124px;top:384px" width="32" height="32" viewBox="0 0 16 16" shape-rendering="crispEdges">
<defs><linearGradient id="pg" x1="0" y1="0" x2="0" y2="1"><stop offset="0" stop-color="#ffffff"/><stop offset="1" stop-color="#dfe9f8"/></linearGradient></defs>
<polygon points="2,2 10,2 13,5 13,16 2,16" fill="url(#pg)"/>
<rect x="5" y="2" width="5" height="1" fill="#c89a30"/>
<rect x="9" y="3" width="1" height="1" fill="#d8b050"/><rect x="10" y="3" width="1" height="1" fill="#c89a30"/>
<rect x="9" y="4" width="2" height="1" fill="#e0c070"/><rect x="11" y="4" width="1" height="1" fill="#c89a30"/>
<rect x="9" y="5" width="3" height="1" fill="#e8cc88"/><rect x="12" y="5" width="1" height="4" fill="#c89a30"/>
<rect x="12" y="14" width="1" height="1" fill="#b08a30"/>
<rect x="2" y="8" width="1" height="8" fill="#8a7428"/>
<rect x="2" y="15" width="11" height="1" fill="#8a7428"/>
<rect x="3" y="1" width="2" height="7" fill="#2e6ea6"/><rect x="1" y="6" width="3" height="2" fill="#3f82b8"/>
<rect x="2" y="1" width="1" height="5" fill="#bcd4ea" opacity=".7"/><rect x="0" y="6" width="1" height="2" fill="#cfe0f0" opacity=".7"/>
<g fill="#0a2463">
<rect x="4" y="9" width="3" height="1"/><rect x="4" y="13" width="3" height="1"/><rect x="4" y="9" width="1" height="5"/><rect x="6" y="9" width="1" height="5"/>
<rect x="9" y="9" width="1" height="5"/>
<rect x="12" y="9" width="3" height="1"/><rect x="12" y="13" width="3" height="1"/><rect x="12" y="9" width="1" height="5"/><rect x="14" y="9" width="1" height="5"/>
</g>
<g fill="#c9d4ea"><rect x="5" y="10" width="1" height="3"/><rect x="13" y="10" width="1" height="3"/></g>
<g fill="#aab2d2"><rect x="4" y="9" width="1" height="1"/><rect x="6" y="9" width="1" height="1"/><rect x="4" y="13" width="1" height="1"/><rect x="6" y="13" width="1" height="1"/><rect x="12" y="9" width="1" height="1"/><rect x="14" y="9" width="1" height="1"/><rect x="12" y="13" width="1" height="1"/><rect x="14" y="13" width="1" height="1"/></g>
</svg>
<div class="t" style="left:166px;top:386px;font-size:27px;letter-spacing:0.556px;">BuildConfig.class</div>
<svg class="ic" style="left:91px;top:428px" width="16" height="20" viewBox="0 0 16 20"><polygon points="0,0.5 15.5,10 0,19.5" fill="#848484"/></svg>
<svg class="ic" style="left:124px;top:422px" width="32" height="32" viewBox="0 0 16 16" shape-rendering="crispEdges">
<defs><linearGradient id="pg" x1="0" y1="0" x2="0" y2="1"><stop offset="0" stop-color="#ffffff"/><stop offset="1" stop-color="#dfe9f8"/></linearGradient></defs>
<polygon points="2,2 10,2 13,5 13,16 2,16" fill="url(#pg)"/>
<rect x="5" y="2" width="5" height="1" fill="#c89a30"/>
<rect x="9" y="3" width="1" height="1" fill="#d8b050"/><rect x="10" y="3" width="1" height="1" fill="#c89a30"/>
<rect x="9" y="4" width="2" height="1" fill="#e0c070"/><rect x="11" y="4" width="1" height="1" fill="#c89a30"/>
<rect x="9" y="5" width="3" height="1" fill="#e8cc88"/><rect x="12" y="5" width="1" height="4" fill="#c89a30"/>
<rect x="12" y="14" width="1" height="1" fill="#b08a30"/>
<rect x="2" y="8" width="1" height="8" fill="#8a7428"/>
<rect x="2" y="15" width="11" height="1" fill="#8a7428"/>
<rect x="3" y="1" width="2" height="7" fill="#2e6ea6"/><rect x="1" y="6" width="3" height="2" fill="#3f82b8"/>
<rect x="2" y="1" width="1" height="5" fill="#bcd4ea" opacity=".7"/><rect x="0" y="6" width="1" height="2" fill="#cfe0f0" opacity=".7"/>
<g fill="#0a2463">
<rect x="4" y="9" width="3" height="1"/><rect x="4" y="13" width="3" height="1"/><rect x="4" y="9" width="1" height="5"/><rect x="6" y="9" width="1" height="5"/>
<rect x="9" y="9" width="1" height="5"/>
<rect x="12" y="9" width="3" height="1"/><rect x="12" y="13" width="3" height="1"/><rect x="12" y="9" width="1" height="5"/><rect x="14" y="9" width="1" height="5"/>
</g>
<g fill="#c9d4ea"><rect x="5" y="10" width="1" height="3"/><rect x="13" y="10" width="1" height="3"/></g>
<g fill="#aab2d2"><rect x="4" y="9" width="1" height="1"/><rect x="6" y="9" width="1" height="1"/><rect x="4" y="13" width="1" height="1"/><rect x="6" y="13" width="1" height="1"/><rect x="12" y="9" width="1" height="1"/><rect x="14" y="9" width="1" height="1"/><rect x="12" y="13" width="1" height="1"/><rect x="14" y="13" width="1" height="1"/></g>
</svg>
<div class="t" style="left:166px;top:424px;font-size:27px;letter-spacing:0.117px;">DBHelper.class</div>
<svg class="ic" style="left:91px;top:466px" width="16" height="20" viewBox="0 0 16 20"><polygon points="0,0.5 15.5,10 0,19.5" fill="#848484"/></svg>
<svg class="ic" style="left:124px;top:460px" width="32" height="32" viewBox="0 0 16 16" shape-rendering="crispEdges">
<defs><linearGradient id="pg" x1="0" y1="0" x2="0" y2="1"><stop offset="0" stop-color="#ffffff"/><stop offset="1" stop-color="#dfe9f8"/></linearGradient></defs>
<polygon points="2,2 10,2 13,5 13,16 2,16" fill="url(#pg)"/>
<rect x="5" y="2" width="5" height="1" fill="#c89a30"/>
<rect x="9" y="3" width="1" height="1" fill="#d8b050"/><rect x="10" y="3" width="1" height="1" fill="#c89a30"/>
<rect x="9" y="4" width="2" height="1" fill="#e0c070"/><rect x="11" y="4" width="1" height="1" fill="#c89a30"/>
<rect x="9" y="5" width="3" height="1" fill="#e8cc88"/><rect x="12" y="5" width="1" height="4" fill="#c89a30"/>
<rect x="12" y="14" width="1" height="1" fill="#b08a30"/>
<rect x="2" y="8" width="1" height="8" fill="#8a7428"/>
<rect x="2" y="15" width="11" height="1" fill="#8a7428"/>
<rect x="3" y="1" width="2" height="7" fill="#2e6ea6"/><rect x="1" y="6" width="3" height="2" fill="#3f82b8"/>
<rect x="2" y="1" width="1" height="5" fill="#bcd4ea" opacity=".7"/><rect x="0" y="6" width="1" height="2" fill="#cfe0f0" opacity=".7"/>
<g fill="#0a2463">
<rect x="4" y="9" width="3" height="1"/><rect x="4" y="13" width="3" height="1"/><rect x="4" y="9" width="1" height="5"/><rect x="6" y="9" width="1" height="5"/>
<rect x="9" y="9" width="1" height="5"/>
<rect x="12" y="9" width="3" height="1"/><rect x="12" y="13" width="3" height="1"/><rect x="12" y="9" width="1" height="5"/><rect x="14" y="9" width="1" height="5"/>
</g>
<g fill="#c9d4ea"><rect x="5" y="10" width="1" height="3"/><rect x="13" y="10" width="1" height="3"/></g>
<g fill="#aab2d2"><rect x="4" y="9" width="1" height="1"/><rect x="6" y="9" width="1" height="1"/><rect x="4" y="13" width="1" height="1"/><rect x="6" y="13" width="1" height="1"/><rect x="12" y="9" width="1" height="1"/><rect x="14" y="9" width="1" height="1"/><rect x="12" y="13" width="1" height="1"/><rect x="14" y="13" width="1" height="1"/></g>
</svg>
<div class="t" style="left:166px;top:462px;font-size:27px;letter-spacing:0.070px;">DataReceiver.class</div>
<svg class="ic" style="left:91px;top:504px" width="16" height="20" viewBox="0 0 16 20"><polygon points="0,0.5 15.5,10 0,19.5" fill="#848484"/></svg>
<svg class="ic" style="left:124px;top:498px" width="32" height="32" viewBox="0 0 16 16" shape-rendering="crispEdges">
<defs><linearGradient id="pg" x1="0" y1="0" x2="0" y2="1"><stop offset="0" stop-color="#ffffff"/><stop offset="1" stop-color="#dfe9f8"/></linearGradient></defs>
<polygon points="2,2 10,2 13,5 13,16 2,16" fill="url(#pg)"/>
<rect x="5" y="2" width="5" height="1" fill="#c89a30"/>
<rect x="9" y="3" width="1" height="1" fill="#d8b050"/><rect x="10" y="3" width="1" height="1" fill="#c89a30"/>
<rect x="9" y="4" width="2" height="1" fill="#e0c070"/><rect x="11" y="4" width="1" height="1" fill="#c89a30"/>
<rect x="9" y="5" width="3" height="1" fill="#e8cc88"/><rect x="12" y="5" width="1" height="4" fill="#c89a30"/>
<rect x="12" y="14" width="1" height="1" fill="#b08a30"/>
<rect x="2" y="8" width="1" height="8" fill="#8a7428"/>
<rect x="2" y="15" width="11" height="1" fill="#8a7428"/>
<rect x="3" y="1" width="2" height="7" fill="#2e6ea6"/><rect x="1" y="6" width="3" height="2" fill="#3f82b8"/>
<rect x="2" y="1" width="1" height="5" fill="#bcd4ea" opacity=".7"/><rect x="0" y="6" width="1" height="2" fill="#cfe0f0" opacity=".7"/>
<g fill="#0a2463">
<rect x="4" y="9" width="3" height="1"/><rect x="4" y="13" width="3" height="1"/><rect x="4" y="9" width="1" height="5"/><rect x="6" y="9" width="1" height="5"/>
<rect x="9" y="9" width="1" height="5"/>
<rect x="12" y="9" width="3" height="1"/><rect x="12" y="13" width="3" height="1"/><rect x="12" y="9" width="1" height="5"/><rect x="14" y="9" width="1" height="5"/>
</g>
<g fill="#c9d4ea"><rect x="5" y="10" width="1" height="3"/><rect x="13" y="10" width="1" height="3"/></g>
<g fill="#aab2d2"><rect x="4" y="9" width="1" height="1"/><rect x="6" y="9" width="1" height="1"/><rect x="4" y="13" width="1" height="1"/><rect x="6" y="13" width="1" height="1"/><rect x="12" y="9" width="1" height="1"/><rect x="14" y="9" width="1" height="1"/><rect x="12" y="13" width="1" height="1"/><rect x="14" y="13" width="1" height="1"/></g>
</svg>
<div class="t" style="left:166px;top:500px;font-size:27px;letter-spacing:0.549px;">MyListAdapter$ViewHolder.c</div>
<svg class="ic" style="left:91px;top:542px" width="16" height="20" viewBox="0 0 16 20"><polygon points="0,0.5 15.5,10 0,19.5" fill="#848484"/></svg>
<svg class="ic" style="left:124px;top:536px" width="32" height="32" viewBox="0 0 16 16" shape-rendering="crispEdges">
<defs><linearGradient id="pg" x1="0" y1="0" x2="0" y2="1"><stop offset="0" stop-color="#ffffff"/><stop offset="1" stop-color="#dfe9f8"/></linearGradient></defs>
<polygon points="2,2 10,2 13,5 13,16 2,16" fill="url(#pg)"/>
<rect x="5" y="2" width="5" height="1" fill="#c89a30"/>
<rect x="9" y="3" width="1" height="1" fill="#d8b050"/><rect x="10" y="3" width="1" height="1" fill="#c89a30"/>
<rect x="9" y="4" width="2" height="1" fill="#e0c070"/><rect x="11" y="4" width="1" height="1" fill="#c89a30"/>
<rect x="9" y="5" width="3" height="1" fill="#e8cc88"/><rect x="12" y="5" width="1" height="4" fill="#c89a30"/>
<rect x="12" y="14" width="1" height="1" fill="#b08a30"/>
<rect x="2" y="8" width="1" height="8" fill="#8a7428"/>
<rect x="2" y="15" width="11" height="1" fill="#8a7428"/>
<rect x="3" y="1" width="2" height="7" fill="#2e6ea6"/><rect x="1" y="6" width="3" height="2" fill="#3f82b8"/>
<rect x="2" y="1" width="1" height="5" fill="#bcd4ea" opacity=".7"/><rect x="0" y="6" width="1" height="2" fill="#cfe0f0" opacity=".7"/>
<g fill="#0a2463">
<rect x="4" y="9" width="3" height="1"/><rect x="4" y="13" width="3" height="1"/><rect x="4" y="9" width="1" height="5"/><rect x="6" y="9" width="1" height="5"/>
<rect x="9" y="9" width="1" height="5"/>
<rect x="12" y="9" width="3" height="1"/><rect x="12" y="13" width="3" height="1"/><rect x="12" y="9" width="1" height="5"/><rect x="14" y="9" width="1" height="5"/>
</g>
<g fill="#c9d4ea"><rect x="5" y="10" width="1" height="3"/><rect x="13" y="10" width="1" height="3"/></g>
<g fill="#aab2d2"><rect x="4" y="9" width="1" height="1"/><rect x="6" y="9" width="1" height="1"/><rect x="4" y="13" width="1" height="1"/><rect x="6" y="13" width="1" height="1"/><rect x="12" y="9" width="1" height="1"/><rect x="14" y="9" width="1" height="1"/><rect x="12" y="13" width="1" height="1"/><rect x="14" y="13" width="1" height="1"/></g>
</svg>
<div class="t" style="left:166px;top:538px;font-size:27px;letter-spacing:0.566px;">MyListAdapter.class</div>
<svg class="ic" style="left:91px;top:580px" width="16" height="20" viewBox="0 0 16 20"><polygon points="0,0.5 15.5,10 0,19.5" fill="#848484"/></svg>
<svg class="ic" style="left:124px;top:574px" width="32" height="32" viewBox="0 0 16 16" shape-rendering="crispEdges">
<defs><linearGradient id="pg" x1="0" y1="0" x2="0" y2="1"><stop offset="0" stop-color="#ffffff"/><stop offset="1" stop-color="#dfe9f8"/></linearGradient></defs>
<polygon points="2,2 10,2 13,5 13,16 2,16" fill="url(#pg)"/>
<rect x="5" y="2" width="5" height="1" fill="#c89a30"/>
<rect x="9" y="3" width="1" height="1" fill="#d8b050"/><rect x="10" y="3" width="1" height="1" fill="#c89a30"/>
<rect x="9" y="4" width="2" height="1" fill="#e0c070"/><rect x="11" y="4" width="1" height="1" fill="#c89a30"/>
<rect x="9" y="5" width="3" height="1" fill="#e8cc88"/><rect x="12" y="5" width="1" height="4" fill="#c89a30"/>
<rect x="12" y="14" width="1" height="1" fill="#b08a30"/>
<rect x="2" y="8" width="1" height="8" fill="#8a7428"/>
<rect x="2" y="15" width="11" height="1" fill="#8a7428"/>
<rect x="3" y="1" width="2" height="7" fill="#2e6ea6"/><rect x="1" y="6" width="3" height="2" fill="#3f82b8"/>
<rect x="2" y="1" width="1" height="5" fill="#bcd4ea" opacity=".7"/><rect x="0" y="6" width="1" height="2" fill="#cfe0f0" opacity=".7"/>
<g fill="#0a2463">
<rect x="4" y="9" width="3" height="1"/><rect x="4" y="13" width="3" height="1"/><rect x="4" y="9" width="1" height="5"/><rect x="6" y="9" width="1" height="5"/>
<rect x="9" y="9" width="1" height="5"/>
<rect x="12" y="9" width="3" height="1"/><rect x="12" y="13" width="3" height="1"/><rect x="12" y="9" width="1" height="5"/><rect x="14" y="9" width="1" height="5"/>
</g>
<g fill="#c9d4ea"><rect x="5" y="10" width="1" height="3"/><rect x="13" y="10" width="1" height="3"/></g>
<g fill="#aab2d2"><rect x="4" y="9" width="1" height="1"/><rect x="6" y="9" width="1" height="1"/><rect x="4" y="13" width="1" height="1"/><rect x="6" y="13" width="1" height="1"/><rect x="12" y="9" width="1" height="1"/><rect x="14" y="9" width="1" height="1"/><rect x="12" y="13" width="1" height="1"/><rect x="14" y="13" width="1" height="1"/></g>
</svg>
<div class="t" style="left:166px;top:576px;font-size:27px;letter-spacing:0.987px;">NotificationCenterActivity$1</div>
<svg class="ic" style="left:91px;top:618px" width="16" height="20" viewBox="0 0 16 20"><polygon points="0,0.5 15.5,10 0,19.5" fill="#848484"/></svg>
<svg class="ic" style="left:124px;top:612px" width="32" height="32" viewBox="0 0 16 16" shape-rendering="crispEdges">
<defs><linearGradient id="pg" x1="0" y1="0" x2="0" y2="1"><stop offset="0" stop-color="#ffffff"/><stop offset="1" stop-color="#dfe9f8"/></linearGradient></defs>
<polygon points="2,2 10,2 13,5 13,16 2,16" fill="url(#pg)"/>
<rect x="5" y="2" width="5" height="1" fill="#c89a30"/>
<rect x="9" y="3" width="1" height="1" fill="#d8b050"/><rect x="10" y="3" width="1" height="1" fill="#c89a30"/>
<rect x="9" y="4" width="2" height="1" fill="#e0c070"/><rect x="11" y="4" width="1" height="1" fill="#c89a30"/>
<rect x="9" y="5" width="3" height="1" fill="#e8cc88"/><rect x="12" y="5" width="1" height="4" fill="#c89a30"/>
<rect x="12" y="14" width="1" height="1" fill="#b08a30"/>
<rect x="2" y="8" width="1" height="8" fill="#8a7428"/>
<rect x="2" y="15" width="11" height="1" fill="#8a7428"/>
<rect x="3" y="1" width="2" height="7" fill="#2e6ea6"/><rect x="1" y="6" width="3" height="2" fill="#3f82b8"/>
<rect x="2" y="1" width="1" height="5" fill="#bcd4ea" opacity=".7"/><rect x="0" y="6" width="1" height="2" fill="#cfe0f0" opacity=".7"/>
<g fill="#0a2463">
<rect x="4" y="9" width="3" height="1"/><rect x="4" y="13" width="3" height="1"/><rect x="4" y="9" width="1" height="5"/><rect x="6" y="9" width="1" height="5"/>
<rect x="9" y="9" width="1" height="5"/>
<rect x="12" y="9" width="3" height="1"/><rect x="12" y="13" width="3" height="1"/><rect x="12" y="9" width="1" height="5"/><rect x="14" y="9" width="1" height="5"/>
</g>
<g fill="#c9d4ea"><rect x="5" y="10" width="1" height="3"/><rect x="13" y="10" width="1" height="3"/></g>
<g fill="#aab2d2"><rect x="4" y="9" width="1" height="1"/><rect x="6" y="9" width="1" height="1"/><rect x="4" y="13" width="1" height="1"/><rect x="6" y="13" width="1" height="1"/><rect x="12" y="9" width="1" height="1"/><rect x="14" y="9" width="1" height="1"/><rect x="12" y="13" width="1" height="1"/><rect x="14" y="13" width="1" height="1"/></g>
</svg>
<div class="t" style="left:166px;top:614px;font-size:27px;letter-spacing:0.987px;">NotificationCenterActivity$2</div>
<svg class="ic" style="left:91px;top:656px" width="16" height="20" viewBox="0 0 16 20"><polygon points="0,0.5 15.5,10 0,19.5" fill="#848484"/></svg>
<svg class="ic" style="left:124px;top:650px" width="32" height="32" viewBox="0 0 16 16" shape-rendering="crispEdges">
<defs><linearGradient id="pg" x1="0" y1="0" x2="0" y2="1"><stop offset="0" stop-color="#ffffff"/><stop offset="1" stop-color="#dfe9f8"/></linearGradient></defs>
<polygon points="2,2 10,2 13,5 13,16 2,16" fill="url(#pg)"/>
<rect x="5" y="2" width="5" height="1" fill="#c89a30"/>
<rect x="9" y="3" width="1" height="1" fill="#d8b050"/><rect x="10" y="3" width="1" height="1" fill="#c89a30"/>
<rect x="9" y="4" width="2" height="1" fill="#e0c070"/><rect x="11" y="4" width="1" height="1" fill="#c89a30"/>
<rect x="9" y="5" width="3" height="1" fill="#e8cc88"/><rect x="12" y="5" width="1" height="4" fill="#c89a30"/>
<rect x="12" y="14" width="1" height="1" fill="#b08a30"/>
<rect x="2" y="8" width="1" height="8" fill="#8a7428"/>
<rect x="2" y="15" width="11" height="1" fill="#8a7428"/>
<rect x="3" y="1" width="2" height="7" fill="#2e6ea6"/><rect x="1" y="6" width="3" height="2" fill="#3f82b8"/>
<rect x="2" y="1" width="1" height="5" fill="#bcd4ea" opacity=".7"/><rect x="0" y="6" width="1" height="2" fill="#cfe0f0" opacity=".7"/>
<g fill="#0a2463">
<rect x="4" y="9" width="3" height="1"/><rect x="4" y="13" width="3" height="1"/><rect x="4" y="9" width="1" height="5"/><rect x="6" y="9" width="1" height="5"/>
<rect x="9" y="9" width="1" height="5"/>
<rect x="12" y="9" width="3" height="1"/><rect x="12" y="13" width="3" height="1"/><rect x="12" y="9" width="1" height="5"/><rect x="14" y="9" width="1" height="5"/>
</g>
<g fill="#c9d4ea"><rect x="5" y="10" width="1" height="3"/><rect x="13" y="10" width="1" height="3"/></g>
<g fill="#aab2d2"><rect x="4" y="9" width="1" height="1"/><rect x="6" y="9" width="1" height="1"/><rect x="4" y="13" width="1" height="1"/><rect x="6" y="13" width="1" height="1"/><rect x="12" y="9" width="1" height="1"/><rect x="14" y="9" width="1" height="1"/><rect x="12" y="13" width="1" height="1"/><rect x="14" y="13" width="1" height="1"/></g>
</svg>
<div class="t" style="left:166px;top:652px;font-size:27px;letter-spacing:0.987px;">NotificationCenterActivity$3</div>
<svg class="ic" style="left:91px;top:694px" width="16" height="20" viewBox="0 0 16 20"><polygon points="0,0.5 15.5,10 0,19.5" fill="#848484"/></svg>
<svg class="ic" style="left:124px;top:688px" width="32" height="32" viewBox="0 0 16 16" shape-rendering="crispEdges">
<defs><linearGradient id="pg" x1="0" y1="0" x2="0" y2="1"><stop offset="0" stop-color="#ffffff"/><stop offset="1" stop-color="#dfe9f8"/></linearGradient></defs>
<polygon points="2,2 10,2 13,5 13,16 2,16" fill="url(#pg)"/>
<rect x="5" y="2" width="5" height="1" fill="#c89a30"/>
<rect x="9" y="3" width="1" height="1" fill="#d8b050"/><rect x="10" y="3" width="1" height="1" fill="#c89a30"/>
<rect x="9" y="4" width="2" height="1" fill="#e0c070"/><rect x="11" y="4" width="1" height="1" fill="#c89a30"/>
<rect x="9" y="5" width="3" height="1" fill="#e8cc88"/><rect x="12" y="5" width="1" height="4" fill="#c89a30"/>
<rect x="12" y="14" width="1" height="1" fill="#b08a30"/>
<rect x="2" y="8" width="1" height="8" fill="#8a7428"/>
<rect x="2" y="15" width="11" height="1" fill="#8a7428"/>
<rect x="3" y="1" width="2" height="7" fill="#2e6ea6"/><rect x="1" y="6" width="3" height="2" fill="#3f82b8"/>
<rect x="2" y="1" width="1" height="5" fill="#bcd4ea" opacity=".7"/><rect x="0" y="6" width="1" height="2" fill="#cfe0f0" opacity=".7"/>
<g fill="#0a2463">
<rect x="4" y="9" width="3" height="1"/><rect x="4" y="13" width="3" height="1"/><rect x="4" y="9" width="1" height="5"/><rect x="6" y="9" width="1" height="5"/>
<rect x="9" y="9" width="1" height="5"/>
<rect x="12" y="9" width="3" height="1"/><rect x="12" y="13" width="3" height="1"/><rect x="12" y="9" width="1" height="5"/><rect x="14" y="9" width="1" height="5"/>
</g>
<g fill="#c9d4ea"><rect x="5" y="10" width="1" height="3"/><rect x="13" y="10" width="1" height="3"/></g>
<g fill="#aab2d2"><rect x="4" y="9" width="1" height="1"/><rect x="6" y="9" width="1" height="1"/><rect x="4" y="13" width="1" height="1"/><rect x="6" y="13" width="1" height="1"/><rect x="12" y="9" width="1" height="1"/><rect x="14" y="9" width="1" height="1"/><rect x="12" y="13" width="1" height="1"/><rect x="14" y="13" width="1" height="1"/></g>
</svg>
<div class="t" style="left:166px;top:690px;font-size:27px;letter-spacing:0.735px;">NotificationCenterActivity$Li</div>
<svg class="ic" style="left:91px;top:732px" width="16" height="20" viewBox="0 0 16 20"><polygon points="0,0.5 15.5,10 0,19.5" fill="#848484"/></svg>
<svg class="ic" style="left:124px;top:726px" width="32" height="32" viewBox="0 0 16 16" shape-rendering="crispEdges">
<defs><linearGradient id="pg" x1="0" y1="0" x2="0" y2="1"><stop offset="0" stop-color="#ffffff"/><stop offset="1" stop-color="#dfe9f8"/></linearGradient></defs>
<polygon points="2,2 10,2 13,5 13,16 2,16" fill="url(#pg)"/>
<rect x="5" y="2" width="5" height="1" fill="#c89a30"/>
<rect x="9" y="3" width="1" height="1" fill="#d8b050"/><rect x="10" y="3" width="1" height="1" fill="#c89a30"/>
<rect x="9" y="4" width="2" height="1" fill="#e0c070"/><rect x="11" y="4" width="1" height="1" fill="#c89a30"/>
<rect x="9" y="5" width="3" height="1" fill="#e8cc88"/><rect x="12" y="5" width="1" height="4" fill="#c89a30"/>
<rect x="12" y="14" width="1" height="1" fill="#b08a30"/>
<rect x="2" y="8" width="1" height="8" fill="#8a7428"/>
<rect x="2" y="15" width="11" height="1" fill="#8a7428"/>
<rect x="3" y="1" width="2" height="7" fill="#2e6ea6"/><rect x="1" y="6" width="3" height="2" fill="#3f82b8"/>
<rect x="2" y="1" width="1" height="5" fill="#bcd4ea" opacity=".7"/><rect x="0" y="6" width="1" height="2" fill="#cfe0f0" opacity=".7"/>
<g fill="#0a2463">
<rect x="4" y="9" width="3" height="1"/><rect x="4" y="13" width="3" height="1"/><rect x="4" y="9" width="1" height="5"/><rect x="6" y="9" width="1" height="5"/>
<rect x="9" y="9" width="1" height="5"/>
<rect x="12" y="9" width="3" height="1"/><rect x="12" y="13" width="3" height="1"/><rect x="12" y="9" width="1" height="5"/><rect x="14" y="9" width="1" height="5"/>
</g>
<g fill="#c9d4ea"><rect x="5" y="10" width="1" height="3"/><rect x="13" y="10" width="1" height="3"/></g>
<g fill="#aab2d2"><rect x="4" y="9" width="1" height="1"/><rect x="6" y="9" width="1" height="1"/><rect x="4" y="13" width="1" height="1"/><rect x="6" y="13" width="1" height="1"/><rect x="12" y="9" width="1" height="1"/><rect x="14" y="9" width="1" height="1"/><rect x="12" y="13" width="1" height="1"/><rect x="14" y="13" width="1" height="1"/></g>
</svg>
<div class="t" style="left:166px;top:728px;font-size:27px;letter-spacing:0.735px;">NotificationCenterActivity$Lo</div>
<svg class="ic" style="left:91px;top:770px" width="16" height="20" viewBox="0 0 16 20"><polygon points="0,0.5 15.5,10 0,19.5" fill="#848484"/></svg>
<svg class="ic" style="left:124px;top:764px" width="32" height="32" viewBox="0 0 16 16" shape-rendering="crispEdges">
<defs><linearGradient id="pg" x1="0" y1="0" x2="0" y2="1"><stop offset="0" stop-color="#ffffff"/><stop offset="1" stop-color="#dfe9f8"/></linearGradient></defs>
<polygon points="2,2 10,2 13,5 13,16 2,16" fill="url(#pg)"/>
<rect x="5" y="2" width="5" height="1" fill="#c89a30"/>
<rect x="9" y="3" width="1" height="1" fill="#d8b050"/><rect x="10" y="3" width="1" height="1" fill="#c89a30"/>
<rect x="9" y="4" width="2" height="1" fill="#e0c070"/><rect x="11" y="4" width="1" height="1" fill="#c89a30"/>
<rect x="9" y="5" width="3" height="1" fill="#e8cc88"/><rect x="12" y="5" width="1" height="4" fill="#c89a30"/>
<rect x="12" y="14" width="1" height="1" fill="#b08a30"/>
<rect x="2" y="8" width="1" height="8" fill="#8a7428"/>
<rect x="2" y="15" width="11" height="1" fill="#8a7428"/>
<rect x="3" y="1" width="2" height="7" fill="#2e6ea6"/><rect x="1" y="6" width="3" height="2" fill="#3f82b8"/>
<rect x="2" y="1" width="1" height="5" fill="#bcd4ea" opacity=".7"/><rect x="0" y="6" width="1" height="2" fill="#cfe0f0" opacity=".7"/>
<g fill="#0a2463">
<rect x="4" y="9" width="3" height="1"/><rect x="4" y="13" width="3" height="1"/><rect x="4" y="9" width="1" height="5"/><rect x="6" y="9" width="1" height="5"/>
<rect x="9" y="9" width="1" height="5"/>
<rect x="12" y="9" width="3" height="1"/><rect x="12" y="13" width="3" height="1"/><rect x="12" y="9" width="1" height="5"/><rect x="14" y="9" width="1" height="5"/>
</g>
<g fill="#c9d4ea"><rect x="5" y="10" width="1" height="3"/><rect x="13" y="10" width="1" height="3"/></g>
<g fill="#aab2d2"><rect x="4" y="9" width="1" height="1"/><rect x="6" y="9" width="1" height="1"/><rect x="4" y="13" width="1" height="1"/><rect x="6" y="13" width="1" height="1"/><rect x="12" y="9" width="1" height="1"/><rect x="14" y="9" width="1" height="1"/><rect x="12" y="13" width="1" height="1"/><rect x="14" y="13" width="1" height="1"/></g>
</svg>
<div class="t" style="left:166px;top:766px;font-size:27px;letter-spacing:0.735px;">NotificationCenterActivity$Lo</div>
<svg class="ic" style="left:91px;top:808px" width="16" height="20" viewBox="0 0 16 20"><polygon points="0,0.5 15.5,10 0,19.5" fill="#848484"/></svg>
<svg class="ic" style="left:124px;top:802px" width="32" height="32" viewBox="0 0 16 16" shape-rendering="crispEdges">
<defs><linearGradient id="pg" x1="0" y1="0" x2="0" y2="1"><stop offset="0" stop-color="#ffffff"/><stop offset="1" stop-color="#dfe9f8"/></linearGradient></defs>
<polygon points="2,2 10,2 13,5 13,16 2,16" fill="url(#pg)"/>
<rect x="5" y="2" width="5" height="1" fill="#c89a30"/>
<rect x="9" y="3" width="1" height="1" fill="#d8b050"/><rect x="10" y="3" width="1" height="1" fill="#c89a30"/>
<rect x="9" y="4" width="2" height="1" fill="#e0c070"/><rect x="11" y="4" width="1" height="1" fill="#c89a30"/>
<rect x="9" y="5" width="3" height="1" fill="#e8cc88"/><rect x="12" y="5" width="1" height="4" fill="#c89a30"/>
<rect x="12" y="14" width="1" height="1" fill="#b08a30"/>
<rect x="2" y="8" width="1" height="8" fill="#8a7428"/>
<rect x="2" y="15" width="11" height="1" fill="#8a7428"/>
<rect x="3" y="1" width="2" height="7" fill="#2e6ea6"/><rect x="1" y="6" width="3" height="2" fill="#3f82b8"/>
<rect x="2" y="1" width="1" height="5" fill="#bcd4ea" opacity=".7"/><rect x="0" y="6" width="1" height="2" fill="#cfe0f0" opacity=".7"/>
<g fill="#0a2463">
<rect x="4" y="9" width="3" height="1"/><rect x="4" y="13" width="3" height="1"/><rect x="4" y="9" width="1" height="5"/><rect x="6" y="9" width="1" height="5"/>
<rect x="9" y="9" width="1" height="5"/>
<rect x="12" y="9" width="3" height="1"/><rect x="12" y="13" width="3" height="1"/><rect x="12" y="9" width="1" height="5"/><rect x="14" y="9" width="1" height="5"/>
</g>
<g fill="#c9d4ea"><rect x="5" y="10" width="1" height="3"/><rect x="13" y="10" width="1" height="3"/></g>
<g fill="#aab2d2"><rect x="4" y="9" width="1" height="1"/><rect x="6" y="9" width="1" height="1"/><rect x="4" y="13" width="1" height="1"/><rect x="6" y="13" width="1" height="1"/><rect x="12" y="9" width="1" height="1"/><rect x="14" y="9" width="1" height="1"/><rect x="12" y="13" width="1" height="1"/><rect x="14" y="13" width="1" height="1"/></g>
</svg>
<div class="t" style="left:166px;top:804px;font-size:27px;letter-spacing:1.032px;">NotificationCenterActivity.cla</div>
<svg class="ic" style="left:91px;top:846px" width="16" height="20" viewBox="0 0 16 20"><polygon points="0,0.5 15.5,10 0,19.5" fill="#848484"/></svg>
<svg class="ic" style="left:124px;top:840px" width="32" height="32" viewBox="0 0 16 16" shape-rendering="crispEdges">
<defs><linearGradient id="pg" x1="0" y1="0" x2="0" y2="1"><stop offset="0" stop-color="#ffffff"/><stop offset="1" stop-color="#dfe9f8"/></linearGradient></defs>
<polygon points="2,2 10,2 13,5 13,16 2,16" fill="url(#pg)"/>
<rect x="5" y="2" width="5" height="1" fill="#c89a30"/>
<rect x="9" y="3" width="1" height="1" fill="#d8b050"/><rect x="10" y="3" width="1" height="1" fill="#c89a30"/>
<rect x="9" y="4" width="2" height="1" fill="#e0c070"/><rect x="11" y="4" width="1" height="1" fill="#c89a30"/>
<rect x="9" y="5" width="3" height="1" fill="#e8cc88"/><rect x="12" y="5" width="1" height="4" fill="#c89a30"/>
<rect x="12" y="14" width="1" height="1" fill="#b08a30"/>
<rect x="2" y="8" width="1" height="8" fill="#8a7428"/>
<rect x="2" y="15" width="11" height="1" fill="#8a7428"/>
<rect x="3" y="1" width="2" height="7" fill="#2e6ea6"/><rect x="1" y="6" width="3" height="2" fill="#3f82b8"/>
<rect x="2" y="1" width="1" height="5" fill="#bcd4ea" opacity=".7"/><rect x="0" y="6" width="1" height="2" fill="#cfe0f0" opacity=".7"/>
<g fill="#0a2463">
<rect x="4" y="9" width="3" height="1"/><rect x="4" y="13" width="3" height="1"/><rect x="4" y="9" width="1" height="5"/><rect x="6" y="9" width="1" height="5"/>
<rect x="9" y="9" width="1" height="5"/>
<rect x="12" y="9" width="3" height="1"/><rect x="12" y="13" width="3" height="1"/><rect x="12" y="9" width="1" height="5"/><rect x="14" y="9" width="1" height="5"/>
</g>
<g fill="#c9d4ea"><rect x="5" y="10" width="1" height="3"/><rect x="13" y="10" width="1" height="3"/></g>
<g fill="#aab2d2"><rect x="4" y="9" width="1" height="1"/><rect x="6" y="9" width="1" height="1"/><rect x="4" y="13" width="1" height="1"/><rect x="6" y="13" width="1" height="1"/><rect x="12" y="9" width="1" height="1"/><rect x="14" y="9" width="1" height="1"/><rect x="12" y="13" width="1" height="1"/><rect x="14" y="13" width="1" height="1"/></g>
</svg>
<div class="t" style="left:166px;top:842px;font-size:27px;letter-spacing:0.877px;">NotificationManagerApplicat</div>
<svg class="ic" style="left:91px;top:884px" width="16" height="20" viewBox="0 0 16 20"><polygon points="0,0.5 15.5,10 0,19.5" fill="#848484"/></svg>
<svg class="ic" style="left:124px;top:878px" width="32" height="32" viewBox="0 0 16 16" shape-rendering="crispEdges">
<defs><linearGradient id="pg" x1="0" y1="0" x2="0" y2="1"><stop offset="0" stop-color="#ffffff"/><stop offset="1" stop-color="#dfe9f8"/></linearGradient></defs>
<polygon points="2,2 10,2 13,5 13,16 2,16" fill="url(#pg)"/>
<rect x="5" y="2" width="5" height="1" fill="#c89a30"/>
<rect x="9" y="3" width="1" height="1" fill="#d8b050"/><rect x="10" y="3" width="1" height="1" fill="#c89a30"/>
<rect x="9" y="4" width="2" height="1" fill="#e0c070"/><rect x="11" y="4" width="1" height="1" fill="#c89a30"/>
<rect x="9" y="5" width="3" height="1" fill="#e8cc88"/><rect x="12" y="5" width="1" height="4" fill="#c89a30"/>
<rect x="12" y="14" width="1" height="1" fill="#b08a30"/>
<rect x="2" y="8" width="1" height="8" fill="#8a7428"/>
<rect x="2" y="15" width="11" height="1" fill="#8a7428"/>
<rect x="3" y="1" width="2" height="7" fill="#2e6ea6"/><rect x="1" y="6" width="3" height="2" fill="#3f82b8"/>
<rect x="2" y="1" width="1" height="5" fill="#bcd4ea" opacity=".7"/><rect x="0" y="6" width="1" height="2" fill="#cfe0f0" opacity=".7"/>
<g fill="#0a2463">
<rect x="4" y="9" width="3" height="1"/><rect x="4" y="13" width="3" height="1"/><rect x="4" y="9" width="1" height="5"/><rect x="6" y="9" width="1" height="5"/>
<rect x="9" y="9" width="1" height="5"/>
<rect x="12" y="9" width="3" height="1"/><rect x="12" y="13" width="3" height="1"/><rect x="12" y="9" width="1" height="5"/><rect x="14" y="9" width="1" height="5"/>
</g>
<g fill="#c9d4ea"><rect x="5" y="10" width="1" height="3"/><rect x="13" y="10" width="1" height="3"/></g>
<g fill="#aab2d2"><rect x="4" y="9" width="1" height="1"/><rect x="6" y="9" width="1" height="1"/><rect x="4" y="13" width="1" height="1"/><rect x="6" y="13" width="1" height="1"/><rect x="12" y="9" width="1" height="1"/><rect x="14" y="9" width="1" height="1"/><rect x="12" y="13" width="1" height="1"/><rect x="14" y="13" width="1" height="1"/></g>
</svg>
<div class="t" style="left:166px;top:880px;font-size:27px;letter-spacing:0.877px;">NotificationManagerApplicat</div>
<svg class="ic" style="left:91px;top:922px" width="16" height="20" viewBox="0 0 16 20"><polygon points="0,0.5 15.5,10 0,19.5" fill="#848484"/></svg>
<svg class="ic" style="left:124px;top:916px" width="32" height="32" viewBox="0 0 16 16" shape-rendering="crispEdges">
<defs><linearGradient id="pg" x1="0" y1="0" x2="0" y2="1"><stop offset="0" stop-color="#ffffff"/><stop offset="1" stop-color="#dfe9f8"/></linearGradient></defs>
<polygon points="2,2 10,2 13,5 13,16 2,16" fill="url(#pg)"/>
<rect x="5" y="2" width="5" height="1" fill="#c89a30"/>
<rect x="9" y="3" width="1" height="1" fill="#d8b050"/><rect x="10" y="3" width="1" height="1" fill="#c89a30"/>
<rect x="9" y="4" width="2" height="1" fill="#e0c070"/><rect x="11" y="4" width="1" height="1" fill="#c89a30"/>
<rect x="9" y="5" width="3" height="1" fill="#e8cc88"/><rect x="12" y="5" width="1" height="4" fill="#c89a30"/>
<rect x="12" y="14" width="1" height="1" fill="#b08a30"/>
<rect x="2" y="8" width="1" height="8" fill="#8a7428"/>
<rect x="2" y="15" width="11" height="1" fill="#8a7428"/>
<rect x="3" y="1" width="2" height="7" fill="#2e6ea6"/><rect x="1" y="6" width="3" height="2" fill="#3f82b8"/>
<rect x="2" y="1" width="1" height="5" fill="#bcd4ea" opacity=".7"/><rect x="0" y="6" width="1" height="2" fill="#cfe0f0" opacity=".7"/>
<g fill="#0a2463">
<rect x="4" y="9" width="3" height="1"/><rect x="4" y="13" width="3" height="1"/><rect x="4" y="9" width="1" height="5"/><rect x="6" y="9" width="1" height="5"/>
<rect x="9" y="9" width="1" height="5"/>
<rect x="12" y="9" width="3" height="1"/><rect x="12" y="13" width="3" height="1"/><rect x="12" y="9" width="1" height="5"/><rect x="14" y="9" width="1" height="5"/>
</g>
<g fill="#c9d4ea"><rect x="5" y="10" width="1" height="3"/><rect x="13" y="10" width="1" height="3"/></g>
<g fill="#aab2d2"><rect x="4" y="9" width="1" height="1"/><rect x="6" y="9" width="1" height="1"/><rect x="4" y="13" width="1" height="1"/><rect x="6" y="13" width="1" height="1"/><rect x="12" y="9" width="1" height="1"/><rect x="14" y="9" width="1" height="1"/><rect x="12" y="13" width="1" height="1"/><rect x="14" y="13" width="1" height="1"/></g>
</svg>
<div class="t" style="left:166px;top:918px;font-size:27px;letter-spacing:0.877px;">NotificationManagerApplicat</div>
<svg class="ic" style="left:91px;top:960px" width="16" height="20" viewBox="0 0 16 20"><polygon points="0,0.5 15.5,10 0,19.5" fill="#848484"/></svg>
<svg class="ic" style="left:124px;top:954px" width="32" height="32" viewBox="0 0 16 16" shape-rendering="crispEdges">
<defs><linearGradient id="pg" x1="0" y1="0" x2="0" y2="1"><stop offset="0" stop-color="#ffffff"/><stop offset="1" stop-color="#dfe9f8"/></linearGradient></defs>
<polygon points="2,2 10,2 13,5 13,16 2,16" fill="url(#pg)"/>
<rect x="5" y="2" width="5" height="1" fill="#c89a30"/>
<rect x="9" y="3" width="1" height="1" fill="#d8b050"/><rect x="10" y="3" width="1" height="1" fill="#c89a30"/>
<rect x="9" y="4" width="2" height="1" fill="#e0c070"/><rect x="11" y="4" width="1" height="1" fill="#c89a30"/>
<rect x="9" y="5" width="3" height="1" fill="#e8cc88"/><rect x="12" y="5" width="1" height="4" fill="#c89a30"/>
<rect x="12" y="14" width="1" height="1" fill="#b08a30"/>
<rect x="2" y="8" width="1" height="8" fill="#8a7428"/>
<rect x="2" y="15" width="11" height="1" fill="#8a7428"/>
<rect x="3" y="1" width="2" height="7" fill="#2e6ea6"/><rect x="1" y="6" width="3" height="2" fill="#3f82b8"/>
<rect x="2" y="1" width="1" height="5" fill="#bcd4ea" opacity=".7"/><rect x="0" y="6" width="1" height="2" fill="#cfe0f0" opacity=".7"/>
<g fill="#0a2463">
<rect x="4" y="9" width="3" height="1"/><rect x="4" y="13" width="3" height="1"/><rect x="4" y="9" width="1" height="5"/><rect x="6" y="9" width="1" height="5"/>
<rect x="9" y="9" width="1" height="5"/>
<rect x="12" y="9" width="3" height="1"/><rect x="12" y="13" width="3" height="1"/><rect x="12" y="9" width="1" height="5"/><rect x="14" y="9" width="1" height="5"/>
</g>
<g fill="#c9d4ea"><rect x="5" y="10" width="1" height="3"/><rect x="13" y="10" width="1" height="3"/></g>
<g fill="#aab2d2"><rect x="4" y="9" width="1" height="1"/><rect x="6" y="9" width="1" height="1"/><rect x="4" y="13" width="1" height="1"/><rect x="6" y="13" width="1" height="1"/><rect x="12" y="9" width="1" height="1"/><rect x="14" y="9" width="1" height="1"/><rect x="12" y="13" width="1" height="1"/><rect x="14" y="13" width="1" height="1"/></g>
</svg>
<div class="t" style="left:166px;top:956px;font-size:27px;letter-spacing:0.666px;">OppoIconUtils.class</div>
<svg class="ic" style="left:91px;top:998px" width="16" height="20" viewBox="0 0 16 20"><polygon points="0,0.5 15.5,10 0,19.5" fill="#848484"/></svg>
<svg class="ic" style="left:124px;top:992px" width="32" height="32" viewBox="0 0 16 16" shape-rendering="crispEdges">
<defs><linearGradient id="pg" x1="0" y1="0" x2="0" y2="1"><stop offset="0" stop-color="#ffffff"/><stop offset="1" stop-color="#dfe9f8"/></linearGradient></defs>
<polygon points="2,2 10,2 13,5 13,16 2,16" fill="url(#pg)"/>
<rect x="5" y="2" width="5" height="1" fill="#c89a30"/>
<rect x="9" y="3" width="1" height="1" fill="#d8b050"/><rect x="10" y="3" width="1" height="1" fill="#c89a30"/>
<rect x="9" y="4" width="2" height="1" fill="#e0c070"/><rect x="11" y="4" width="1" height="1" fill="#c89a30"/>
<rect x="9" y="5" width="3" height="1" fill="#e8cc88"/><rect x="12" y="5" width="1" height="4" fill="#c89a30"/>
<rect x="12" y="14" width="1" height="1" fill="#b08a30"/>
<rect x="2" y="8" width="1" height="8" fill="#8a7428"/>
<rect x="2" y="15" width="11" height="1" fill="#8a7428"/>
<rect x="3" y="1" width="2" height="7" fill="#2e6ea6"/><rect x="1" y="6" width="3" height="2" fill="#3f82b8"/>
<rect x="2" y="1" width="1" height="5" fill="#bcd4ea" opacity=".7"/><rect x="0" y="6" width="1" height="2" fill="#cfe0f0" opacity=".7"/>
<g fill="#0a2463">
<rect x="4" y="9" width="3" height="1"/><rect x="4" y="13" width="3" height="1"/><rect x="4" y="9" width="1" height="5"/><rect x="6" y="9" width="1" height="5"/>
<rect x="9" y="9" width="1" height="5"/>
<rect x="12" y="9" width="3" height="1"/><rect x="12" y="13" width="3" height="1"/><rect x="12" y="9" width="1" height="5"/><rect x="14" y="9" width="1" height="5"/>
</g>
<g fill="#c9d4ea"><rect x="5" y="10" width="1" height="3"/><rect x="13" y="10" width="1" height="3"/></g>
<g fill="#aab2d2"><rect x="4" y="9" width="1" height="1"/><rect x="6" y="9" width="1" height="1"/><rect x="4" y="13" width="1" height="1"/><rect x="6" y="13" width="1" height="1"/><rect x="12" y="9" width="1" height="1"/><rect x="14" y="9" width="1" height="1"/><rect x="12" y="13" width="1" height="1"/><rect x="14" y="13" width="1" height="1"/></g>
</svg>
<div class="t" style="left:166px;top:994px;font-size:27px;letter-spacing:0.034px;">PowerProvider$DatabaseHelp</div>
<svg class="ic" style="left:91px;top:1036px" width="16" height="20" viewBox="0 0 16 20"><polygon points="0,0.5 15.5,10 0,19.5" fill="#848484"/></svg>
<svg class="ic" style="left:124px;top:1030px" width="32" height="32" viewBox="0 0 16 16" shape-rendering="crispEdges">
<defs><linearGradient id="pg" x1="0" y1="0" x2="0" y2="1"><stop offset="0" stop-color="#ffffff"/><stop offset="1" stop-color="#dfe9f8"/></linearGradient></defs>
<polygon points="2,2 10,2 13,5 13,16 2,16" fill="url(#pg)"/>
<rect x="5" y="2" width="5" height="1" fill="#c89a30"/>
<rect x="9" y="3" width="1" height="1" fill="#d8b050"/><rect x="10" y="3" width="1" height="1" fill="#c89a30"/>
<rect x="9" y="4" width="2" height="1" fill="#e0c070"/><rect x="11" y="4" width="1" height="1" fill="#c89a30"/>
<rect x="9" y="5" width="3" height="1" fill="#e8cc88"/><rect x="12" y="5" width="1" height="4" fill="#c89a30"/>
<rect x="12" y="14" width="1" height="1" fill="#b08a30"/>
<rect x="2" y="8" width="1" height="8" fill="#8a7428"/>
<rect x="2" y="15" width="11" height="1" fill="#8a7428"/>
<rect x="3" y="1" width="2" height="7" fill="#2e6ea6"/><rect x="1" y="6" width="3" height="2" fill="#3f82b8"/>
<rect x="2" y="1" width="1" height="5" fill="#bcd4ea" opacity=".7"/><rect x="0" y="6" width="1" height="2" fill="#cfe0f0" opacity=".7"/>
<g fill="#0a2463">
<rect x="4" y="9" width="3" height="1"/><rect x="4" y="13" width="3" height="1"/><rect x="4" y="9" width="1" height="5"/><rect x="6" y="9" width="1" height="5"/>
<rect x="9" y="9" width="1" height="5"/>
<rect x="12" y="9" width="3" height="1"/><rect x="12" y="13" width="3" height="1"/><rect x="12" y="9" width="1" height="5"/><rect x="14" y="9" width="1" height="5"/>
</g>
<g fill="#c9d4ea"><rect x="5" y="10" width="1" height="3"/><rect x="13" y="10" width="1" height="3"/></g>
<g fill="#aab2d2"><rect x="4" y="9" width="1" height="1"/><rect x="6" y="9" width="1" height="1"/><rect x="4" y="13" width="1" height="1"/><rect x="6" y="13" width="1" height="1"/><rect x="12" y="9" width="1" height="1"/><rect x="14" y="9" width="1" height="1"/><rect x="12" y="13" width="1" height="1"/><rect x="14" y="13" width="1" height="1"/></g>
</svg>
<div class="t" style="left:166px;top:1032px;font-size:27px;letter-spacing:0.034px;">PowerProvider$DatabaseHelp</div>
<svg class="ic" style="left:91px;top:1074px" width="16" height="20" viewBox="0 0 16 20"><polygon points="0,0.5 15.5,10 0,19.5" fill="#848484"/></svg>
<svg class="ic" style="left:124px;top:1068px" width="32" height="32" viewBox="0 0 16 16" shape-rendering="crispEdges">
<defs><linearGradient id="pg" x1="0" y1="0" x2="0" y2="1"><stop offset="0" stop-color="#ffffff"/><stop offset="1" stop-color="#dfe9f8"/></linearGradient></defs>
<polygon points="2,2 10,2 13,5 13,16 2,16" fill="url(#pg)"/>
<rect x="5" y="2" width="5" height="1" fill="#c89a30"/>
<rect x="9" y="3" width="1" height="1" fill="#d8b050"/><rect x="10" y="3" width="1" height="1" fill="#c89a30"/>
<rect x="9" y="4" width="2" height="1" fill="#e0c070"/><rect x="11" y="4" width="1" height="1" fill="#c89a30"/>
<rect x="9" y="5" width="3" height="1" fill="#e8cc88"/><rect x="12" y="5" width="1" height="4" fill="#c89a30"/>
<rect x="12" y="14" width="1" height="1" fill="#b08a30"/>
<rect x="2" y="8" width="1" height="8" fill="#8a7428"/>
<rect x="2" y="15" width="11" height="1" fill="#8a7428"/>
<rect x="3" y="1" width="2" height="7" fill="#2e6ea6"/><rect x="1" y="6" width="3" height="2" fill="#3f82b8"/>
<rect x="2" y="1" width="1" height="5" fill="#bcd4ea" opacity=".7"/><rect x="0" y="6" width="1" height="2" fill="#cfe0f0" opacity=".7"/>
<g fill="#0a2463">
<rect x="4" y="9" width="3" height="1"/><rect x="4" y="13" width="3" height="1"/><rect x="4" y="9" width="1" height="5"/><rect x="6" y="9" width="1" height="5"/>
<rect x="9" y="9" width="1" height="5"/>
<rect x="12" y="9" width="3" height="1"/><rect x="12" y="13" width="3" height="1"/><rect x="12" y="9" width="1" height="5"/><rect x="14" y="9" width="1" height="5"/>
</g>
<g fill="#c9d4ea"><rect x="5" y="10" width="1" height="3"/><rect x="13" y="10" width="1" height="3"/></g>
<g fill="#aab2d2"><rect x="4" y="9" width="1" height="1"/><rect x="6" y="9" width="1" height="1"/><rect x="4" y="13" width="1" height="1"/><rect x="6" y="13" width="1" height="1"/><rect x="12" y="9" width="1" height="1"/><rect x="14" y="9" width="1" height="1"/><rect x="12" y="13" width="1" height="1"/><rect x="14" y="13" width="1" height="1"/></g>
</svg>
<div class="t" style="left:166px;top:1070px;font-size:27px;letter-spacing:0.088px;">PowerProvider.class</div>
<svg class="ic" style="left:91px;top:1112px" width="16" height="20" viewBox="0 0 16 20"><polygon points="0,0.5 15.5,10 0,19.5" fill="#848484"/></svg>
<svg class="ic" style="left:124px;top:1106px" width="32" height="32" viewBox="0 0 16 16" shape-rendering="crispEdges">
<defs><linearGradient id="pg" x1="0" y1="0" x2="0" y2="1"><stop offset="0" stop-color="#ffffff"/><stop offset="1" stop-color="#dfe9f8"/></linearGradient></defs>
<polygon points="2,2 10,2 13,5 13,16 2,16" fill="url(#pg)"/>
<rect x="5" y="2" width="5" height="1" fill="#c89a30"/>
<rect x="9" y="3" width="1" height="1" fill="#d8b050"/><rect x="10" y="3" width="1" height="1" fill="#c89a30"/>
<rect x="9" y="4" width="2" height="1" fill="#e0c070"/><rect x="11" y="4" width="1" height="1" fill="#c89a30"/>
<rect x="9" y="5" width="3" height="1" fill="#e8cc88"/><rect x="12" y="5" width="1" height="4" fill="#c89a30"/>
<rect x="12" y="14" width="1" height="1" fill="#b08a30"/>
<rect x="2" y="8" width="1" height="8" fill="#8a7428"/>
<rect x="2" y="15" width="11" height="1" fill="#8a7428"/>
<rect x="3" y="1" width="2" height="7" fill="#2e6ea6"/><rect x="1" y="6" width="3" height="2" fill="#3f82b8"/>
<rect x="2" y="1" width="1" height="5" fill="#bcd4ea" opacity=".7"/><rect x="0" y="6" width="1" height="2" fill="#cfe0f0" opacity=".7"/>
<g fill="#0a2463">
<rect x="4" y="9" width="3" height="1"/><rect x="4" y="13" width="3" height="1"/><rect x="4" y="9" width="1" height="5"/><rect x="6" y="9" width="1" height="5"/>
<rect x="9" y="9" width="1" height="5"/>
<rect x="12" y="9" width="3" height="1"/><rect x="12" y="13" width="3" height="1"/><rect x="12" y="9" width="1" height="5"/><rect x="14" y="9" width="1" height="5"/>
</g>
<g fill="#c9d4ea"><rect x="5" y="10" width="1" height="3"/><rect x="13" y="10" width="1" height="3"/></g>
<g fill="#aab2d2"><rect x="4" y="9" width="1" height="1"/><rect x="6" y="9" width="1" height="1"/><rect x="4" y="13" width="1" height="1"/><rect x="6" y="13" width="1" height="1"/><rect x="12" y="9" width="1" height="1"/><rect x="14" y="9" width="1" height="1"/><rect x="12" y="13" width="1" height="1"/><rect x="14" y="13" width="1" height="1"/></g>
</svg>
<div class="t" style="left:166px;top:1108px;font-size:27px;letter-spacing:0.079px;">R$array.class</div>
<svg class="ic" style="left:91px;top:1150px" width="16" height="20" viewBox="0 0 16 20"><polygon points="0,0.5 15.5,10 0,19.5" fill="#848484"/></svg>
<svg class="ic" style="left:124px;top:1144px" width="32" height="32" viewBox="0 0 16 16" shape-rendering="crispEdges">
<defs><linearGradient id="pg" x1="0" y1="0" x2="0" y2="1"><stop offset="0" stop-color="#ffffff"/><stop offset="1" stop-color="#dfe9f8"/></linearGradient></defs>
<polygon points="2,2 10,2 13,5 13,16 2,16" fill="url(#pg)"/>
<rect x="5" y="2" width="5" height="1" fill="#c89a30"/>
<rect x="9" y="3" width="1" height="1" fill="#d8b050"/><rect x="10" y="3" width="1" height="1" fill="#c89a30"/>
<rect x="9" y="4" width="2" height="1" fill="#e0c070"/><rect x="11" y="4" width="1" height="1" fill="#c89a30"/>
<rect x="9" y="5" width="3" height="1" fill="#e8cc88"/><rect x="12" y="5" width="1" height="4" fill="#c89a30"/>
<rect x="12" y="14" width="1" height="1" fill="#b08a30"/>
<rect x="2" y="8" width="1" height="8" fill="#8a7428"/>
<rect x="2" y="15" width="11" height="1" fill="#8a7428"/>
<rect x="3" y="1" width="2" height="7" fill="#2e6ea6"/><rect x="1" y="6" width="3" height="2" fill="#3f82b8"/>
<rect x="2" y="1" width="1" height="5" fill="#bcd4ea" opacity=".7"/><rect x="0" y="6" width="1" height="2" fill="#cfe0f0" opacity=".7"/>
<g fill="#0a2463">
<rect x="4" y="9" width="3" height="1"/><rect x="4" y="13" width="3" height="1"/><rect x="4" y="9" width="1" height="5"/><rect x="6" y="9" width="1" height="5"/>
<rect x="9" y="9" width="1" height="5"/>
<rect x="12" y="9" width="3" height="1"/><rect x="12" y="13" width="3" height="1"/><rect x="12" y="9" width="1" height="5"/><rect x="14" y="9" width="1" height="5"/>
</g>
<g fill="#c9d4ea"><rect x="5" y="10" width="1" height="3"/><rect x="13" y="10" width="1" height="3"/></g>
<g fill="#aab2d2"><rect x="4" y="9" width="1" height="1"/><rect x="6" y="9" width="1" height="1"/><rect x="4" y="13" width="1" height="1"/><rect x="6" y="13" width="1" height="1"/><rect x="12" y="9" width="1" height="1"/><rect x="14" y="9" width="1" height="1"/><rect x="12" y="13" width="1" height="1"/><rect x="14" y="13" width="1" height="1"/></g>
</svg>
<div class="t" style="left:166px;top:1146px;font-size:27px;letter-spacing:0.949px;">R$attr.class</div>
</div>
<div class="a" style="left:556px;top:166px;width:30px;height:1150px;background:linear-gradient(90deg,#f0f0f0,#fafafa 30%,#fcfcfc 70%,#f4f4f4);border-left:1px solid #e6e6e6"></div>
<div class="thumb" style="left:564px;top:168px;width:16px;height:585px"></div>
<div class="a" style="left:28px;top:1316px;width:528px;height:30px;background:linear-gradient(#f0f0f0,#fafafa 30%,#fcfcfc 70%,#f4f4f4);border-top:1px solid #e6e6e6"></div>
<div class="thumb" style="left:32px;top:1323px;width:274px;height:16px"></div>
<div class="a" style="left:594px;top:751px;width:10px;height:10px;border-radius:5px;background:radial-gradient(circle at 50% 65%,#ffffff 0%,#f4f4f4 45%,#d8d8d8 100%);border-top:1px solid #b4b4b4"></div>
<div class="a" style="left:624px;top:194px;width:1654px;height:1134px;border-radius:9px;background:#e5e5e5;box-shadow:inset 0 0 0 1px #cacaca, inset 0 1px 4px 1px #d0d0d0"></div>
<div class="a" style="left:2246px;top:228px;width:28px;height:1094px;background:#eeeeee"></div>
<div class="a" style="left:1185px;top:171px;width:530px;height:40px;border-radius:7px;background:linear-gradient(#828282,#a4a4a4);border:1px solid #6c6c6c;box-shadow:inset 0 2px 3px rgba(0,0,0,.25)"></div>
<svg class="ic" style="left:1200px;top:173px" width="32" height="32" viewBox="0 0 16 16" shape-rendering="crispEdges">
<defs><linearGradient id="pg" x1="0" y1="0" x2="0" y2="1"><stop offset="0" stop-color="#ffffff"/><stop offset="1" stop-color="#dfe9f8"/></linearGradient></defs>
<polygon points="2,2 10,2 13,5 13,16 2,16" fill="url(#pg)"/>
<rect x="5" y="2" width="5" height="1" fill="#c89a30"/>
<rect x="9" y="3" width="1" height="1" fill="#d8b050"/><rect x="10" y="3" width="1" height="1" fill="#c89a30"/>
<rect x="9" y="4" width="2" height="1" fill="#e0c070"/><rect x="11" y="4" width="1" height="1" fill="#c89a30"/>
<rect x="9" y="5" width="3" height="1" fill="#e8cc88"/><rect x="12" y="5" width="1" height="4" fill="#c89a30"/>
<rect x="12" y="14" width="1" height="1" fill="#b08a30"/>
<rect x="2" y="8" width="1" height="8" fill="#8a7428"/>
<rect x="2" y="15" width="11" height="1" fill="#8a7428"/>
<rect x="3" y="1" width="2" height="7" fill="#2e6ea6"/><rect x="1" y="6" width="3" height="2" fill="#3f82b8"/>
<rect x="2" y="1" width="1" height="5" fill="#bcd4ea" opacity=".7"/><rect x="0" y="6" width="1" height="2" fill="#cfe0f0" opacity=".7"/>
<g fill="#0a2463">
<rect x="4" y="9" width="3" height="1"/><rect x="4" y="13" width="3" height="1"/><rect x="4" y="9" width="1" height="5"/><rect x="6" y="9" width="1" height="5"/>
<rect x="9" y="9" width="1" height="5"/>
<rect x="12" y="9" width="3" height="1"/><rect x="12" y="13" width="3" height="1"/><rect x="12" y="9" width="1" height="5"/><rect x="14" y="9" width="1" height="5"/>
</g>
<g fill="#c9d4ea"><rect x="5" y="10" width="1" height="3"/><rect x="13" y="10" width="1" height="3"/></g>
<g fill="#aab2d2"><rect x="4" y="9" width="1" height="1"/><rect x="6" y="9" width="1" height="1"/><rect x="4" y="13" width="1" height="1"/><rect x="6" y="13" width="1" height="1"/><rect x="12" y="9" width="1" height="1"/><rect x="14" y="9" width="1" height="1"/><rect x="12" y="13" width="1" height="1"/><rect x="14" y="13" width="1" height="1"/></g>
</svg>
<div class="t" id="tab2" style="left:1240px;top:176px;font-size:27px;letter-spacing:0.526px">AppDetailPreferenceActivity.class</div>
<svg class="ic" style="left:1674px;top:181px" width="20" height="20" viewBox="0 0 10 10" shape-rendering="crispEdges"><rect x="0" y="0" width="3" height="1" fill="#6b675a"/><rect x="7" y="0" width="3" height="1" fill="#6b675a"/><rect x="0" y="1" width="1" height="1" fill="#6b675a"/><rect x="1" y="1" width="2" height="1" fill="#ffffff"/><rect x="3" y="1" width="1" height="1" fill="#6b675a"/><rect x="6" y="1" width="1" height="1" fill="#6b675a"/><rect x="7" y="1" width="2" height="1" fill="#ffffff"/><rect x="9" y="1" width="1" height="1" fill="#6b675a"/><rect x="0" y="2" width="1" height="1" fill="#6b675a"/><rect x="1" y="2" width="3" height="1" fill="#ffffff"/><rect x="4" y="2" width="2" height="1" fill="#6b675a"/><rect x="6" y="2" width="3" height="1" fill="#ffffff"/><rect x="9" y="2" width="1" height="1" fill="#6b675a"/><rect x="1" y="3" width="1" height="1" fill="#6b675a"/><rect x="2" y="3" width="6" height="1" fill="#ffffff"/><rect x="8" y="3" width="1" height="1" fill="#6b675a"/><rect x="2" y="4" width="1" height="1" fill="#6b675a"/><rect x="3" y="4" width="4" height="1" fill="#ffffff"/><rect x="7" y="4" width="1" height="1" fill="#6b675a"/><rect x="2" y="5" width="1" height="1" fill="#6b675a"/><rect x="3" y="5" width="4" height="1" fill="#ffffff"/><rect x="7" y="5" width="1" height="1" fill="#6b675a"/><rect x="1" y="6" width="1" height="1" fill="#6b675a"/><rect x="2" y="6" width="6" height="1" fill="#ffffff"/><rect x="8" y="6" width="1" height="1" fill="#6b675a"/><rect x="0" y="7" width="1" height="1" fill="#6b675a"/><rect x="1" y="7" width="3" height="1" fill="#ffffff"/><rect x="4" y="7" width="2" height="1" fill="#6b675a"/><rect x="6" y="7" width="3" height="1" fill="#ffffff"/><rect x="9" y="7" width="1" height="1" fill="#6b675a"/><rect x="0" y="8" width="1" height="1" fill="#6b675a"/><rect x="1" y="8" width="2" height="1" fill="#ffffff"/><rect x="3" y="8" width="1" height="1" fill="#6b675a"/><rect x="6" y="8" width="1" height="1" fill="#6b675a"/><rect x="7" y="8" width="2" height="1" fill="#ffffff"/><rect x="9" y="8" width="1" height="1" fill="#6b675a"/><rect x="0" y="9" width="3" height="1" fill="#6b675a"/><rect x="7" y="9" width="3" height="1" fill="#6b675a"/></svg>
<div class="a" style="left:630px;top:228px;width:1616px;height:1094px;background:#fff;border:2px solid #8e8e8e;border-top-color:#5a5a5a;border-left-color:#858585"></div>
<div class="a" style="left:658px;top:232px;width:1px;height:1058px;background:#dcdcdc"></div>
<div class="a" id="codevp" style="left:660px;top:230px;width:1552px;height:1060px;overflow:hidden;background:#fff">
<div class="a" style="left:0;top:684px;width:1552px;height:34px;background:#e8f2fe"></div>
<div class="a" style="left:624px;top:514px;width:64px;height:102px;background:#ffff66"></div>
<div class="cl" style="top:5px">      localObject1 = <span class="k">this</span>;</div>
<div class="cl" style="top:39px">      localObject2 = <span class="k">this</span>.<span class="u">mSoundPreference</span>;</div>
<div class="cl" style="top:73px">      localObject1 = <span class="k">this</span>;</div>
<div class="cl" style="top:107px">      localObject3 = <span class="k">this</span>.<span class="u">mPkg</span>;</div>
<div class="cl" style="top:141px">      localObject1 = <span class="k">this</span>;</div>
<div class="cl" style="top:175px">      localObject1 = <span class="k">this</span>.<span class="u">mContext</span>;</div>
<div class="cl" style="top:209px">      localObject4 = localObject1;</div>
<div class="cl" style="top:243px">      bool8 = <span class="u">Util</span>.<span class="u">getNotificationSoundVibrateEnabled</span>((String)localObject3, (Context)localObject1, (String)localObject4);</div>
<div class="cl" style="top:277px">      ((SwitchPreference)localObject2).setChecked(bool8);</div>
<div class="cl" style="top:311px">    }</div>
<div class="cl" style="top:345px">  }</div>
<div class="cl" style="top:379px"></div>
<div class="cl" style="top:413px">  <span class="k">public</span> <span class="k">void</span> handleIntent()</div>
<div class="cl" style="top:447px">  {</div>
<div class="cl" style="top:481px">    Intent localIntent = getIntent();</div>
<div class="cl" style="top:515px">    String str1 = localIntent.getStringExtra(<span class="s">"pkg_name"</span>);</div>
<div class="cl" style="top:549px">    String str2 = localIntent.getStringExtra(<span class="s">"app_name"</span>);</div>
<div class="cl" style="top:583px">    String str3 = localIntent.getStringExtra(<span class="s">"class_name"</span>);</div>
<div class="cl" style="top:617px">    <span class="k">this</span>.<span class="u">mClassName</span> = str3;</div>
<div class="cl" style="top:651px">    <span class="k">this</span>.<span class="u">mPkg</span> = str1;</div>
<div class="cl" style="top:685px">    setTitle(str2);</div>
<div class="cl" style="top:719px">  }</div>
<div class="cl" style="top:753px"></div>
<div class="cl" style="top:787px">  <span class="k">protected</span> <span class="k">void</span> onCreate(Bundle paramBundle)</div>
<div class="cl" style="top:821px">  {</div>
<div class="cl" style="top:855px">    <span class="k">super</span>.<span class="u">onCreate</span>(paramBundle);</div>
<div class="cl" style="top:889px">    <span class="k">this</span>.<span class="u">mContext</span> = <span class="k">this</span>;</div>
<div class="cl" style="top:923px">    Object localObject = <span class="u">getNotificationInterface</span>();</div>
<div class="cl" style="top:957px">    <span class="k">this</span>.<span class="u">mNoMan</span> = ((INotificationManager)localObject);</div>
<div class="cl" style="top:991px">    getActionBar().setDisplayHomeAsUpEnabled(<span class="k">true</span>);</div>
<div class="cl" style="top:1025px">    addPreferencesFromResource(2130968576);</div>
<div class="cl" style="top:1059px">    addPreferencesFromResource(2130968577);</div>
</div>
<svg class="ic" style="left:637px;top:683px" width="20" height="20" viewBox="0 0 20 20">
<defs><linearGradient id="fg" x1="0" y1="0" x2="0" y2="1"><stop offset="0" stop-color="#eaf1f9"/><stop offset="1" stop-color="#bfd2e8"/></linearGradient></defs><circle cx="10" cy="10" r="8.4" fill="url(#fg)" stroke="#8ea8c6" stroke-width="1.5"/><rect x="5" y="8.8" width="10" height="2.6" fill="#1c2f5e"/></svg>
<svg class="ic" style="left:637px;top:1057px" width="20" height="20" viewBox="0 0 20 20">
<defs><linearGradient id="fg" x1="0" y1="0" x2="0" y2="1"><stop offset="0" stop-color="#eaf1f9"/><stop offset="1" stop-color="#bfd2e8"/></linearGradient></defs><circle cx="10" cy="10" r="8.4" fill="url(#fg)" stroke="#8ea8c6" stroke-width="1.5"/><rect x="5" y="8.8" width="10" height="2.6" fill="#1c2f5e"/></svg>
<div class="a" style="left:2212px;top:232px;width:30px;height:1058px;background:linear-gradient(90deg,#f0f0f0,#fafafa 30%,#fcfcfc 70%,#f4f4f4);border-left:1px solid #e6e6e6"></div>
<div class="thumb" style="left:2220px;top:770px;width:16px;height:41px"></div>
<div class="a" style="left:660px;top:1290px;width:1552px;height:30px;background:linear-gradient(#f0f0f0,#fafafa 30%,#fcfcfc 70%,#f4f4f4);border-top:1px solid #e6e6e6"></div>
<div class="thumb" style="left:662px;top:1297px;width:1304px;height:16px"></div>
<div class="a" style="left:2250px;top:783px;width:20px;height:11px;background:#ffff66;border-right:2px solid #b8b040;border-bottom:2px solid #b8b040"></div>
<div class="a" style="left:2246px;top:794px;width:28px;height:4px;background:#8fc0ff"></div>
<div class="a" style="left:2250px;top:966px;width:20px;height:11px;background:#ffff66;border-right:2px solid #b8b040;border-bottom:2px solid #b8b040"></div>
<div class="t" style="left:21px;top:1388px;font-size:27px;letter-spacing:0.242px">Find:</div>
<div class="a" style="left:90px;top:1380px;width:902px;height:46px;background:linear-gradient(#c94c4c 0px,#ee6060 3px,#ff6666 6px,#ff6666 100%);box-shadow:inset 1px 0 0 #e05a5a"></div>
<div class="t" style="left:104px;top:1390px;font-size:27px;letter-spacing:1.6px">extr</div>
<div class="a" style="left:985px;top:1384px;width:36px;height:39px;background:linear-gradient(#ffffff 0%,#ffffff 46%,#ececec 54%,#ececec 85%,#fafafa 100%);border:1.5px solid #a2a2a2;border-left:none;border-radius:0 9px 9px 0;box-shadow:0 1px 1px rgba(0,0,0,.12)"></div>
<svg class="ic" style="left:996px;top:1399px" width="14" height="10" viewBox="0 0 14 10"><polygon points="0,0 14,0 7,10" fill="#4a4a4a"/></svg>
<svg class="ic" style="left:1042px;top:1386px" width="28" height="32" viewBox="0 0 14 16" shape-rendering="crispEdges">
<defs><linearGradient id="np" x1="0" y1="0" x2="0" y2="1"><stop offset="0" stop-color="#ffffff"/><stop offset="1" stop-color="#dbe6f5"/></linearGradient>
<linearGradient id="nb" x1="0" y1="0" x2="0" y2="1"><stop offset="0" stop-color="#b4ac78"/><stop offset="1" stop-color="#7f90b4"/></linearGradient>
<linearGradient id="na" x1="0" y1="0" x2="0" y2="1"><stop offset="0" stop-color="#fffdf0"/><stop offset="1" stop-color="#fbd36a"/></linearGradient></defs>
<rect x="1" y="3" width="13" height="13" fill="url(#np)"/>
<rect x="13" y="3" width="1" height="13" fill="url(#nb)"/><rect x="1" y="12" width="1" height="4" fill="#8493b4"/>
<g fill="#b9bdd9"><rect x="8" y="3" width="4" height="1"/><rect x="10" y="5" width="2" height="1"/><rect x="10" y="7" width="2" height="1"/><rect x="9" y="9" width="3" height="1"/><rect x="7" y="11" width="2" height="1"/><rect x="10" y="11" width="2" height="1"/><rect x="7" y="13" width="5" height="1"/></g>
<rect x="3" y="13" width="3" height="2" fill="#2e5e9e"/>
<polygon points="2,0 7,0 7,6 9,6 9,7 4.5,12 0,7 0,6 2,6" fill="#b86e00"/>
<polygon points="3,1 6,1 6,7 7.6,7 4.5,10.4 1.4,7 3,7" fill="url(#na)"/>
</svg>
<div class="t" style="left:1083px;top:1388px;font-size:22px;letter-spacing:1.050px">Next</div>
<svg class="ic" style="left:1142px;top:1386px" width="28" height="32" viewBox="0 0 14 16" shape-rendering="crispEdges">
<rect x="1" y="0" width="13" height="13" fill="url(#np)"/>
<rect x="13" y="0" width="1" height="13" fill="url(#nb)"/><rect x="1" y="0" width="1" height="5" fill="#b4ac78"/>
<g fill="#b9bdd9"><rect x="7" y="2" width="5" height="1"/><rect x="7" y="4" width="2" height="1"/><rect x="10" y="4" width="2" height="1"/><rect x="9" y="6" width="3" height="1"/><rect x="10" y="8" width="2" height="1"/><rect x="10" y="10" width="2" height="1"/><rect x="8" y="12" width="4" height="1"/></g>
<rect x="3" y="1" width="3" height="2" fill="#2e5e9e"/>
<polygon points="4.5,4 9,9 9,10 7,10 7,16 2,16 2,10 0,10 0,9" fill="#b86e00"/>
<polygon points="4.5,5.6 7.6,9 6,9 6,15 3,15 3,9 1.4,9" fill="url(#na)"/>
</svg>
<div class="t" style="left:1183px;top:1388px;font-size:22px;letter-spacing:0.558px">Previous</div>
<div class="a" style="left:1297px;top:1392px;width:26px;height:26px;border-radius:6px;background:linear-gradient(#ffffff 0%,#ffffff 45%,#ececec 55%,#ececec 88%,#f8f8f8 100%);border:1.5px solid #9c9c9c;border-bottom-color:#868686;box-shadow:0 1px 2px rgba(0,0,0,.28)"></div>
<div class="t" style="left:1336px;top:1391px;font-size:27px;letter-spacing:0.262px">Case sensitive</div>
<svg class="ic" style="left:2270px;top:1392px" width="20" height="20" viewBox="0 0 10 10" shape-rendering="crispEdges"><rect x="0" y="0" width="3" height="1" fill="#6b675a"/><rect x="7" y="0" width="3" height="1" fill="#6b675a"/><rect x="0" y="1" width="1" height="1" fill="#6b675a"/><rect x="1" y="1" width="2" height="1" fill="#ffffff"/><rect x="3" y="1" width="1" height="1" fill="#6b675a"/><rect x="6" y="1" width="1" height="1" fill="#6b675a"/><rect x="7" y="1" width="2" height="1" fill="#ffffff"/><rect x="9" y="1" width="1" height="1" fill="#6b675a"/><rect x="0" y="2" width="1" height="1" fill="#6b675a"/><rect x="1" y="2" width="3" height="1" fill="#ffffff"/><rect x="4" y="2" width="2" height="1" fill="#6b675a"/><rect x="6" y="2" width="3" height="1" fill="#ffffff"/><rect x="9" y="2" width="1" height="1" fill="#6b675a"/><rect x="1" y="3" width="1" height="1" fill="#6b675a"/><rect x="2" y="3" width="6" height="1" fill="#ffffff"/><rect x="8" y="3" width="1" height="1" fill="#6b675a"/><rect x="2" y="4" width="1" height="1" fill="#6b675a"/><rect x="3" y="4" width="4" height="1" fill="#ffffff"/><rect x="7" y="4" width="1" height="1" fill="#6b675a"/><rect x="2" y="5" width="1" height="1" fill="#6b675a"/><rect x="3" y="5" width="4" height="1" fill="#ffffff"/><rect x="7" y="5" width="1" height="1" fill="#6b675a"/><rect x="1" y="6" width="1" height="1" fill="#6b675a"/><rect x="2" y="6" width="6" height="1" fill="#ffffff"/><rect x="8" y="6" width="1" height="1" fill="#6b675a"/><rect x="0" y="7" width="1" height="1" fill="#6b675a"/><rect x="1" y="7" width="3" height="1" fill="#ffffff"/><rect x="4" y="7" width="2" height="1" fill="#6b675a"/><rect x="6" y="7" width="3" height="1" fill="#ffffff"/><rect x="9" y="7" width="1" height="1" fill="#6b675a"/><rect x="0" y="8" width="1" height="1" fill="#6b675a"/><rect x="1" y="8" width="2" height="1" fill="#ffffff"/><rect x="3" y="8" width="1" height="1" fill="#6b675a"/><rect x="6" y="8" width="1" height="1" fill="#6b675a"/><rect x="7" y="8" width="2" height="1" fill="#ffffff"/><rect x="9" y="8" width="1" height="1" fill="#6b675a"/><rect x="0" y="9" width="3" height="1" fill="#6b675a"/><rect x="7" y="9" width="3" height="1" fill="#6b675a"/></svg>
</div></body></html>
